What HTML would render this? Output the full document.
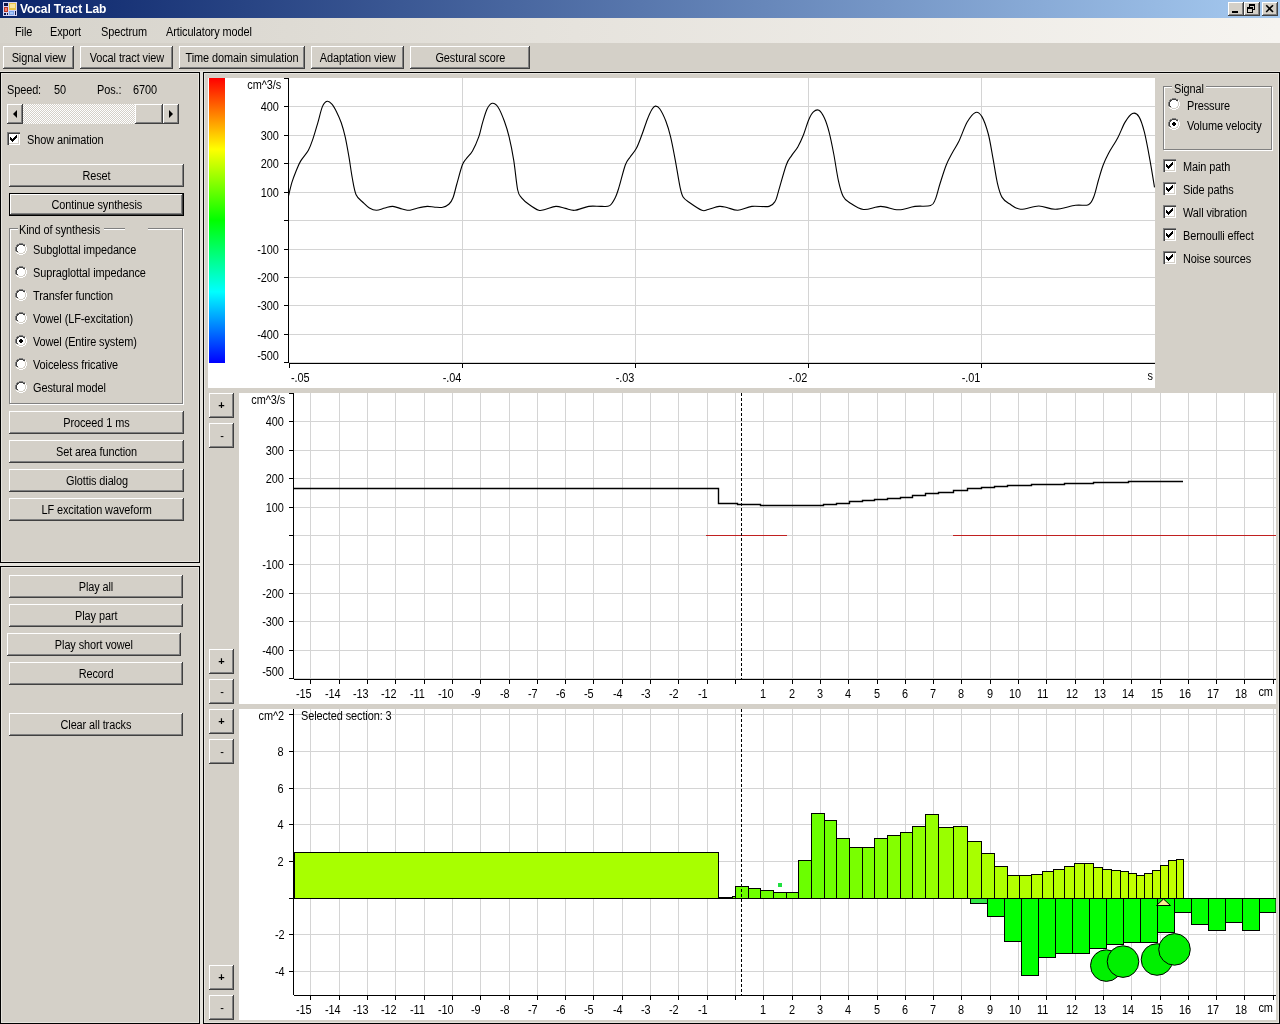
<!DOCTYPE html>
<html><head><meta charset="utf-8"><title>Vocal Tract Lab</title><style>
*{margin:0;padding:0;box-sizing:border-box}
html,body{width:1280px;height:1024px;overflow:hidden;background:#d4d0c8;font:11px 'Liberation Sans', sans-serif;color:#000}
body>div,.a{position:absolute}
#tx{position:absolute;left:0;top:0;width:1280px;height:1024px;z-index:2;will-change:transform}
.t{position:absolute;line-height:13px;white-space:pre;letter-spacing:-0.1px}
.btn{position:absolute;background:#d4d0c8;box-shadow:inset -1px -1px #404040,inset 1px 1px #fff,inset -2px -2px #808080,inset 2px 2px #d4d0c8}
.btn.def{box-shadow:inset 0 0 0 1px #000,inset -2px -2px #404040,inset 2px 2px #fff,inset -3px -3px #808080}
.panel{position:absolute;border:1px solid #000;box-shadow:inset 0 0 0 1px #e6e4de}
.chk{position:absolute;background:#fff;box-shadow:inset 1px 1px #808080,inset 2px 2px #404040,inset -1px -1px #fff,inset -2px -2px #d4d0c8}
.grp{position:absolute;border:1px solid #808080;box-shadow:1px 1px #fff,inset 1px 1px #fff}
svg.plots{position:absolute;left:0;top:0;z-index:1}
</style></head>
<body>

<div class="" style="left:0px;top:0px;width:1280px;height:18px;background:linear-gradient(to right,#0a246a,#a6caf0)"></div>
<svg class="a" style="left:3px;top:2px" width="14" height="14" shape-rendering="crispEdges"><rect x="0" y="0" width="1" height="1" fill="#d4d4f4"/><rect x="1" y="0" width="1" height="1" fill="#d4d4f4"/><rect x="2" y="0" width="1" height="1" fill="#d4d4f4"/><rect x="3" y="0" width="1" height="1" fill="#d4d4f4"/><rect x="4" y="0" width="1" height="1" fill="#d4d4f4"/><rect x="5" y="0" width="1" height="1" fill="#d4d4f4"/><rect x="6" y="0" width="1" height="1" fill="#d4d4f4"/><rect x="7" y="0" width="1" height="1" fill="#d4d4f4"/><rect x="8" y="0" width="1" height="1" fill="#d4d4f4"/><rect x="9" y="0" width="1" height="1" fill="#d4d4f4"/><rect x="10" y="0" width="1" height="1" fill="#d4d4f4"/><rect x="11" y="0" width="1" height="1" fill="#d4d4f4"/><rect x="12" y="0" width="1" height="1" fill="#d4d4f4"/><rect x="13" y="0" width="1" height="1" fill="#d4d4f4"/><rect x="0" y="1" width="1" height="1" fill="#d4d4f4"/><rect x="1" y="1" width="1" height="1" fill="#0c1448"/><rect x="2" y="1" width="1" height="1" fill="#0c1448"/><rect x="3" y="1" width="1" height="1" fill="#0c1448"/><rect x="4" y="1" width="1" height="1" fill="#0c1448"/><rect x="5" y="1" width="1" height="1" fill="#d4d4f4"/><rect x="6" y="1" width="1" height="1" fill="#e8c448"/><rect x="7" y="1" width="1" height="1" fill="#e8c448"/><rect x="8" y="1" width="1" height="1" fill="#e8c448"/><rect x="9" y="1" width="1" height="1" fill="#e8c448"/><rect x="10" y="1" width="1" height="1" fill="#e8c448"/><rect x="11" y="1" width="1" height="1" fill="#e8c448"/><rect x="12" y="1" width="1" height="1" fill="#e8c448"/><rect x="13" y="1" width="1" height="1" fill="#d4d4f4"/><rect x="0" y="2" width="1" height="1" fill="#d4d4f4"/><rect x="1" y="2" width="1" height="1" fill="#0c1448"/><rect x="2" y="2" width="1" height="1" fill="#0c1448"/><rect x="3" y="2" width="1" height="1" fill="#0c1448"/><rect x="4" y="2" width="1" height="1" fill="#0c1448"/><rect x="5" y="2" width="1" height="1" fill="#d4d4f4"/><rect x="6" y="2" width="1" height="1" fill="#e8c448"/><rect x="7" y="2" width="1" height="1" fill="#e8c448"/><rect x="8" y="2" width="1" height="1" fill="#e8c448"/><rect x="9" y="2" width="1" height="1" fill="#e8c448"/><rect x="10" y="2" width="1" height="1" fill="#e8c448"/><rect x="11" y="2" width="1" height="1" fill="#e8c448"/><rect x="12" y="2" width="1" height="1" fill="#e8c448"/><rect x="13" y="2" width="1" height="1" fill="#d4d4f4"/><rect x="0" y="3" width="1" height="1" fill="#d4d4f4"/><rect x="1" y="3" width="1" height="1" fill="#0c1448"/><rect x="2" y="3" width="1" height="1" fill="#0c1448"/><rect x="3" y="3" width="1" height="1" fill="#0c1448"/><rect x="4" y="3" width="1" height="1" fill="#0c1448"/><rect x="5" y="3" width="1" height="1" fill="#d4d4f4"/><rect x="6" y="3" width="1" height="1" fill="#e8c448"/><rect x="7" y="3" width="1" height="1" fill="#e8c448"/><rect x="8" y="3" width="1" height="1" fill="#e8c448"/><rect x="9" y="3" width="1" height="1" fill="#e8c448"/><rect x="10" y="3" width="1" height="1" fill="#e8c448"/><rect x="11" y="3" width="1" height="1" fill="#e8c448"/><rect x="12" y="3" width="1" height="1" fill="#e8c448"/><rect x="13" y="3" width="1" height="1" fill="#d4d4f4"/><rect x="0" y="4" width="1" height="1" fill="#d4d4f4"/><rect x="1" y="4" width="1" height="1" fill="#d4d4f4"/><rect x="2" y="4" width="1" height="1" fill="#d4d4f4"/><rect x="3" y="4" width="1" height="1" fill="#d4d4f4"/><rect x="4" y="4" width="1" height="1" fill="#d4d4f4"/><rect x="5" y="4" width="1" height="1" fill="#d4d4f4"/><rect x="6" y="4" width="1" height="1" fill="#e8c448"/><rect x="7" y="4" width="1" height="1" fill="#e8c448"/><rect x="8" y="4" width="1" height="1" fill="#e8c448"/><rect x="9" y="4" width="1" height="1" fill="#e8c448"/><rect x="10" y="4" width="1" height="1" fill="#e8c448"/><rect x="11" y="4" width="1" height="1" fill="#e8c448"/><rect x="12" y="4" width="1" height="1" fill="#e8c448"/><rect x="13" y="4" width="1" height="1" fill="#d4d4f4"/><rect x="0" y="5" width="1" height="1" fill="#d4d4f4"/><rect x="1" y="5" width="1" height="1" fill="#b83424"/><rect x="2" y="5" width="1" height="1" fill="#b83424"/><rect x="3" y="5" width="1" height="1" fill="#b83424"/><rect x="4" y="5" width="1" height="1" fill="#b83424"/><rect x="5" y="5" width="1" height="1" fill="#d4d4f4"/><rect x="6" y="5" width="1" height="1" fill="#e8c448"/><rect x="7" y="5" width="1" height="1" fill="#e8c448"/><rect x="8" y="5" width="1" height="1" fill="#e8c448"/><rect x="9" y="5" width="1" height="1" fill="#e8c448"/><rect x="10" y="5" width="1" height="1" fill="#e8c448"/><rect x="11" y="5" width="1" height="1" fill="#e8c448"/><rect x="12" y="5" width="1" height="1" fill="#e8c448"/><rect x="13" y="5" width="1" height="1" fill="#d4d4f4"/><rect x="0" y="6" width="1" height="1" fill="#d4d4f4"/><rect x="1" y="6" width="1" height="1" fill="#b83424"/><rect x="2" y="6" width="1" height="1" fill="#b83424"/><rect x="3" y="6" width="1" height="1" fill="#b83424"/><rect x="4" y="6" width="1" height="1" fill="#b83424"/><rect x="5" y="6" width="1" height="1" fill="#d4d4f4"/><rect x="6" y="6" width="1" height="1" fill="#e8c448"/><rect x="7" y="6" width="1" height="1" fill="#e8c448"/><rect x="8" y="6" width="1" height="1" fill="#e8c448"/><rect x="9" y="6" width="1" height="1" fill="#e8c448"/><rect x="10" y="6" width="1" height="1" fill="#e8c448"/><rect x="11" y="6" width="1" height="1" fill="#e8c448"/><rect x="12" y="6" width="1" height="1" fill="#e8c448"/><rect x="13" y="6" width="1" height="1" fill="#d4d4f4"/><rect x="0" y="7" width="1" height="1" fill="#d4d4f4"/><rect x="1" y="7" width="1" height="1" fill="#b83424"/><rect x="2" y="7" width="1" height="1" fill="#b83424"/><rect x="3" y="7" width="1" height="1" fill="#b83424"/><rect x="4" y="7" width="1" height="1" fill="#b83424"/><rect x="5" y="7" width="1" height="1" fill="#d4d4f4"/><rect x="6" y="7" width="1" height="1" fill="#e8c448"/><rect x="7" y="7" width="1" height="1" fill="#e8c448"/><rect x="8" y="7" width="1" height="1" fill="#e8c448"/><rect x="9" y="7" width="1" height="1" fill="#e8c448"/><rect x="10" y="7" width="1" height="1" fill="#e8c448"/><rect x="11" y="7" width="1" height="1" fill="#e8c448"/><rect x="12" y="7" width="1" height="1" fill="#e8c448"/><rect x="13" y="7" width="1" height="1" fill="#d4d4f4"/><rect x="0" y="8" width="1" height="1" fill="#d4d4f4"/><rect x="1" y="8" width="1" height="1" fill="#b83424"/><rect x="2" y="8" width="1" height="1" fill="#b83424"/><rect x="3" y="8" width="1" height="1" fill="#b83424"/><rect x="4" y="8" width="1" height="1" fill="#b83424"/><rect x="5" y="8" width="1" height="1" fill="#d4d4f4"/><rect x="6" y="8" width="1" height="1" fill="#d4d4f4"/><rect x="7" y="8" width="1" height="1" fill="#d4d4f4"/><rect x="8" y="8" width="1" height="1" fill="#d4d4f4"/><rect x="9" y="8" width="1" height="1" fill="#d4d4f4"/><rect x="10" y="8" width="1" height="1" fill="#d4d4f4"/><rect x="11" y="8" width="1" height="1" fill="#d4d4f4"/><rect x="12" y="8" width="1" height="1" fill="#d4d4f4"/><rect x="13" y="8" width="1" height="1" fill="#d4d4f4"/><rect x="0" y="9" width="1" height="1" fill="#d4d4f4"/><rect x="1" y="9" width="1" height="1" fill="#b83424"/><rect x="2" y="9" width="1" height="1" fill="#b83424"/><rect x="3" y="9" width="1" height="1" fill="#b83424"/><rect x="4" y="9" width="1" height="1" fill="#b83424"/><rect x="5" y="9" width="1" height="1" fill="#d4d4f4"/><rect x="6" y="9" width="1" height="1" fill="#7aa4ec"/><rect x="7" y="9" width="1" height="1" fill="#7aa4ec"/><rect x="8" y="9" width="1" height="1" fill="#7aa4ec"/><rect x="9" y="9" width="1" height="1" fill="#7aa4ec"/><rect x="10" y="9" width="1" height="1" fill="#7aa4ec"/><rect x="11" y="9" width="1" height="1" fill="#d4d4f4"/><rect x="12" y="9" width="1" height="1" fill="#0c1448"/><rect x="13" y="9" width="1" height="1" fill="#d4d4f4"/><rect x="0" y="10" width="1" height="1" fill="#d4d4f4"/><rect x="1" y="10" width="1" height="1" fill="#d4d4f4"/><rect x="2" y="10" width="1" height="1" fill="#d4d4f4"/><rect x="3" y="10" width="1" height="1" fill="#d4d4f4"/><rect x="4" y="10" width="1" height="1" fill="#d4d4f4"/><rect x="5" y="10" width="1" height="1" fill="#d4d4f4"/><rect x="6" y="10" width="1" height="1" fill="#7aa4ec"/><rect x="7" y="10" width="1" height="1" fill="#7aa4ec"/><rect x="8" y="10" width="1" height="1" fill="#7aa4ec"/><rect x="9" y="10" width="1" height="1" fill="#7aa4ec"/><rect x="10" y="10" width="1" height="1" fill="#7aa4ec"/><rect x="11" y="10" width="1" height="1" fill="#d4d4f4"/><rect x="12" y="10" width="1" height="1" fill="#0c1448"/><rect x="13" y="10" width="1" height="1" fill="#d4d4f4"/><rect x="0" y="11" width="1" height="1" fill="#d4d4f4"/><rect x="1" y="11" width="1" height="1" fill="#0c1448"/><rect x="2" y="11" width="1" height="1" fill="#0c1448"/><rect x="3" y="11" width="1" height="1" fill="#d4d4f4"/><rect x="4" y="11" width="1" height="1" fill="#0c1448"/><rect x="5" y="11" width="1" height="1" fill="#d4d4f4"/><rect x="6" y="11" width="1" height="1" fill="#7aa4ec"/><rect x="7" y="11" width="1" height="1" fill="#7aa4ec"/><rect x="8" y="11" width="1" height="1" fill="#7aa4ec"/><rect x="9" y="11" width="1" height="1" fill="#7aa4ec"/><rect x="10" y="11" width="1" height="1" fill="#7aa4ec"/><rect x="11" y="11" width="1" height="1" fill="#d4d4f4"/><rect x="12" y="11" width="1" height="1" fill="#0c1448"/><rect x="13" y="11" width="1" height="1" fill="#d4d4f4"/><rect x="0" y="12" width="1" height="1" fill="#d4d4f4"/><rect x="1" y="12" width="1" height="1" fill="#0c1448"/><rect x="2" y="12" width="1" height="1" fill="#0c1448"/><rect x="3" y="12" width="1" height="1" fill="#d4d4f4"/><rect x="4" y="12" width="1" height="1" fill="#0c1448"/><rect x="5" y="12" width="1" height="1" fill="#d4d4f4"/><rect x="6" y="12" width="1" height="1" fill="#7aa4ec"/><rect x="7" y="12" width="1" height="1" fill="#7aa4ec"/><rect x="8" y="12" width="1" height="1" fill="#7aa4ec"/><rect x="9" y="12" width="1" height="1" fill="#7aa4ec"/><rect x="10" y="12" width="1" height="1" fill="#7aa4ec"/><rect x="11" y="12" width="1" height="1" fill="#d4d4f4"/><rect x="12" y="12" width="1" height="1" fill="#0c1448"/><rect x="13" y="12" width="1" height="1" fill="#d4d4f4"/><rect x="0" y="13" width="1" height="1" fill="#d4d4f4"/><rect x="1" y="13" width="1" height="1" fill="#d4d4f4"/><rect x="2" y="13" width="1" height="1" fill="#d4d4f4"/><rect x="3" y="13" width="1" height="1" fill="#d4d4f4"/><rect x="4" y="13" width="1" height="1" fill="#d4d4f4"/><rect x="5" y="13" width="1" height="1" fill="#d4d4f4"/><rect x="6" y="13" width="1" height="1" fill="#d4d4f4"/><rect x="7" y="13" width="1" height="1" fill="#d4d4f4"/><rect x="8" y="13" width="1" height="1" fill="#d4d4f4"/><rect x="9" y="13" width="1" height="1" fill="#d4d4f4"/><rect x="10" y="13" width="1" height="1" fill="#d4d4f4"/><rect x="11" y="13" width="1" height="1" fill="#d4d4f4"/><rect x="12" y="13" width="1" height="1" fill="#d4d4f4"/><rect x="13" y="13" width="1" height="1" fill="#d4d4f4"/><rect x="7" y="2" width="5" height="4" fill="#f8e49c"/><rect x="2" y="6" width="2" height="3" fill="#f08070"/><rect x="7" y="10" width="3" height="2" fill="#a8c8f8"/></svg>
<div class="btn" style="left:1228px;top:2px;width:16px;height:14px;"></div>
<div class="btn" style="left:1244px;top:2px;width:16px;height:14px;"></div>
<div class="btn" style="left:1262px;top:2px;width:16px;height:14px;"></div>
<svg class="a" style="left:1228px;top:2px" width="50" height="14"><rect x="4" y="9" width="6" height="2" fill="#000"/><g transform="translate(16,0)" fill="none" stroke="#000" shape-rendering="crispEdges"><rect x="5.5" y="2.5" width="5" height="5"/><line x1="5" y1="3.5" x2="11" y2="3.5"/><rect x="3.5" y="5.5" width="5" height="5" fill="#d4d0c8"/><line x1="3" y1="6.5" x2="9" y2="6.5"/></g><g transform="translate(34,0)" stroke="#000" stroke-width="1.6"><line x1="4.2" y1="3.2" x2="11" y2="10"/><line x1="11" y1="3.2" x2="4.2" y2="10"/></g></svg>
<div class="" style="left:0px;top:18px;width:1280px;height:25px;background:linear-gradient(to right,#d6d3cb,#e6e3dd 45%,#f6f4f0)"></div>
<div class="btn" style="left:3px;top:46px;width:71px;height:23px;"></div>
<div class="btn" style="left:80px;top:46px;width:93px;height:23px;"></div>
<div class="btn" style="left:179px;top:46px;width:126px;height:23px;"></div>
<div class="btn" style="left:311px;top:46px;width:93px;height:23px;"></div>
<div class="btn" style="left:410px;top:46px;width:120px;height:23px;"></div>
<div class="" style="left:0px;top:71px;width:1280px;height:1px;background:#e4e2dc"></div>
<div class="" style="left:200px;top:72px;width:3px;height:952px;background:#e4e2dc"></div>
<div class="" style="left:0px;top:563px;width:200px;height:3px;background:#e4e2dc"></div>
<div class="panel" style="left:0px;top:72px;width:200px;height:491px;"></div>
<div class="panel" style="left:0px;top:566px;width:200px;height:458px;"></div>
<div class="panel" style="left:203px;top:72px;width:1077px;height:952px;"></div>
<div class="" style="left:23px;top:104px;width:112px;height:20px;background:repeating-conic-gradient(#fff 0 25%,#d4d0c8 0 50%) 0 0/2px 2px"></div>
<div class="btn" style="left:7px;top:104px;width:16px;height:20px;"></div>
<div class="btn" style="left:135px;top:104px;width:28px;height:20px;"></div>
<div class="btn" style="left:163px;top:104px;width:16px;height:20px;"></div>
<svg class="a" style="left:7px;top:104px" width="172" height="20"><path d="M6 10 L10 6 L10 14 Z" fill="#000"/><path d="M162 6 L166 10 L162 14 Z" fill="#000"/></svg>
<div class="chk" style="left:7px;top:132px;width:13px;height:13px;"></div>
<svg class="a" style="left:7px;top:132px" width="13" height="13" shape-rendering="crispEdges"><rect x="9" y="3" width="1" height="1"/><rect x="8" y="4" width="1" height="1"/><rect x="9" y="4" width="1" height="1"/><rect x="3" y="5" width="1" height="1"/><rect x="7" y="5" width="1" height="1"/><rect x="8" y="5" width="1" height="1"/><rect x="9" y="5" width="1" height="1"/><rect x="3" y="6" width="1" height="1"/><rect x="4" y="6" width="1" height="1"/><rect x="6" y="6" width="1" height="1"/><rect x="7" y="6" width="1" height="1"/><rect x="8" y="6" width="1" height="1"/><rect x="3" y="7" width="1" height="1"/><rect x="4" y="7" width="1" height="1"/><rect x="5" y="7" width="1" height="1"/><rect x="6" y="7" width="1" height="1"/><rect x="7" y="7" width="1" height="1"/><rect x="4" y="8" width="1" height="1"/><rect x="5" y="8" width="1" height="1"/><rect x="6" y="8" width="1" height="1"/><rect x="5" y="9" width="1" height="1"/></svg>
<div class="btn" style="left:9px;top:164px;width:175px;height:23px;"></div>
<div class="btn def" style="left:9px;top:193px;width:175px;height:23px;"></div>
<div class="grp" style="left:9px;top:228px;width:174px;height:176px"></div>
<div class="" style="left:18px;top:222px;width:86px;height:12px;background:#d4d0c8"></div>
<div class="" style="left:125px;top:226px;width:23px;height:4px;background:#d4d0c8"></div>
<svg class="a" style="left:15px;top:243px" width="12" height="12" shape-rendering="crispEdges"><rect x="4" y="0" width="1" height="1" fill="#808080"/><rect x="5" y="0" width="1" height="1" fill="#808080"/><rect x="6" y="0" width="1" height="1" fill="#808080"/><rect x="7" y="0" width="1" height="1" fill="#808080"/><rect x="2" y="1" width="1" height="1" fill="#808080"/><rect x="3" y="1" width="1" height="1" fill="#808080"/><rect x="4" y="1" width="1" height="1" fill="#404040"/><rect x="5" y="1" width="1" height="1" fill="#404040"/><rect x="6" y="1" width="1" height="1" fill="#404040"/><rect x="7" y="1" width="1" height="1" fill="#404040"/><rect x="8" y="1" width="1" height="1" fill="#808080"/><rect x="9" y="1" width="1" height="1" fill="#808080"/><rect x="1" y="2" width="1" height="1" fill="#808080"/><rect x="2" y="2" width="1" height="1" fill="#404040"/><rect x="3" y="2" width="1" height="1" fill="#404040"/><rect x="4" y="2" width="1" height="1" fill="#fff"/><rect x="5" y="2" width="1" height="1" fill="#fff"/><rect x="6" y="2" width="1" height="1" fill="#fff"/><rect x="7" y="2" width="1" height="1" fill="#fff"/><rect x="8" y="2" width="1" height="1" fill="#404040"/><rect x="9" y="2" width="1" height="1" fill="#404040"/><rect x="10" y="2" width="1" height="1" fill="#fff"/><rect x="1" y="3" width="1" height="1" fill="#808080"/><rect x="2" y="3" width="1" height="1" fill="#404040"/><rect x="3" y="3" width="1" height="1" fill="#fff"/><rect x="4" y="3" width="1" height="1" fill="#fff"/><rect x="5" y="3" width="1" height="1" fill="#fff"/><rect x="6" y="3" width="1" height="1" fill="#fff"/><rect x="7" y="3" width="1" height="1" fill="#fff"/><rect x="8" y="3" width="1" height="1" fill="#fff"/><rect x="9" y="3" width="1" height="1" fill="#d4d0c8"/><rect x="10" y="3" width="1" height="1" fill="#fff"/><rect x="0" y="4" width="1" height="1" fill="#808080"/><rect x="1" y="4" width="1" height="1" fill="#404040"/><rect x="2" y="4" width="1" height="1" fill="#fff"/><rect x="3" y="4" width="1" height="1" fill="#fff"/><rect x="4" y="4" width="1" height="1" fill="#fff"/><rect x="5" y="4" width="1" height="1" fill="#fff"/><rect x="6" y="4" width="1" height="1" fill="#fff"/><rect x="7" y="4" width="1" height="1" fill="#fff"/><rect x="8" y="4" width="1" height="1" fill="#fff"/><rect x="9" y="4" width="1" height="1" fill="#fff"/><rect x="10" y="4" width="1" height="1" fill="#d4d0c8"/><rect x="11" y="4" width="1" height="1" fill="#fff"/><rect x="0" y="5" width="1" height="1" fill="#808080"/><rect x="1" y="5" width="1" height="1" fill="#404040"/><rect x="2" y="5" width="1" height="1" fill="#fff"/><rect x="3" y="5" width="1" height="1" fill="#fff"/><rect x="4" y="5" width="1" height="1" fill="#fff"/><rect x="5" y="5" width="1" height="1" fill="#fff"/><rect x="6" y="5" width="1" height="1" fill="#fff"/><rect x="7" y="5" width="1" height="1" fill="#fff"/><rect x="8" y="5" width="1" height="1" fill="#fff"/><rect x="9" y="5" width="1" height="1" fill="#fff"/><rect x="10" y="5" width="1" height="1" fill="#d4d0c8"/><rect x="11" y="5" width="1" height="1" fill="#fff"/><rect x="0" y="6" width="1" height="1" fill="#808080"/><rect x="1" y="6" width="1" height="1" fill="#404040"/><rect x="2" y="6" width="1" height="1" fill="#fff"/><rect x="3" y="6" width="1" height="1" fill="#fff"/><rect x="4" y="6" width="1" height="1" fill="#fff"/><rect x="5" y="6" width="1" height="1" fill="#fff"/><rect x="6" y="6" width="1" height="1" fill="#fff"/><rect x="7" y="6" width="1" height="1" fill="#fff"/><rect x="8" y="6" width="1" height="1" fill="#fff"/><rect x="9" y="6" width="1" height="1" fill="#fff"/><rect x="10" y="6" width="1" height="1" fill="#d4d0c8"/><rect x="11" y="6" width="1" height="1" fill="#fff"/><rect x="0" y="7" width="1" height="1" fill="#808080"/><rect x="1" y="7" width="1" height="1" fill="#404040"/><rect x="2" y="7" width="1" height="1" fill="#fff"/><rect x="3" y="7" width="1" height="1" fill="#fff"/><rect x="4" y="7" width="1" height="1" fill="#fff"/><rect x="5" y="7" width="1" height="1" fill="#fff"/><rect x="6" y="7" width="1" height="1" fill="#fff"/><rect x="7" y="7" width="1" height="1" fill="#fff"/><rect x="8" y="7" width="1" height="1" fill="#fff"/><rect x="9" y="7" width="1" height="1" fill="#fff"/><rect x="10" y="7" width="1" height="1" fill="#d4d0c8"/><rect x="11" y="7" width="1" height="1" fill="#fff"/><rect x="1" y="8" width="1" height="1" fill="#808080"/><rect x="2" y="8" width="1" height="1" fill="#404040"/><rect x="3" y="8" width="1" height="1" fill="#fff"/><rect x="4" y="8" width="1" height="1" fill="#fff"/><rect x="5" y="8" width="1" height="1" fill="#fff"/><rect x="6" y="8" width="1" height="1" fill="#fff"/><rect x="7" y="8" width="1" height="1" fill="#fff"/><rect x="8" y="8" width="1" height="1" fill="#fff"/><rect x="9" y="8" width="1" height="1" fill="#d4d0c8"/><rect x="10" y="8" width="1" height="1" fill="#fff"/><rect x="1" y="9" width="1" height="1" fill="#fff"/><rect x="2" y="9" width="1" height="1" fill="#d4d0c8"/><rect x="3" y="9" width="1" height="1" fill="#d4d0c8"/><rect x="4" y="9" width="1" height="1" fill="#fff"/><rect x="5" y="9" width="1" height="1" fill="#fff"/><rect x="6" y="9" width="1" height="1" fill="#fff"/><rect x="7" y="9" width="1" height="1" fill="#fff"/><rect x="8" y="9" width="1" height="1" fill="#d4d0c8"/><rect x="9" y="9" width="1" height="1" fill="#d4d0c8"/><rect x="10" y="9" width="1" height="1" fill="#fff"/><rect x="2" y="10" width="1" height="1" fill="#fff"/><rect x="3" y="10" width="1" height="1" fill="#fff"/><rect x="4" y="10" width="1" height="1" fill="#d4d0c8"/><rect x="5" y="10" width="1" height="1" fill="#d4d0c8"/><rect x="6" y="10" width="1" height="1" fill="#d4d0c8"/><rect x="7" y="10" width="1" height="1" fill="#d4d0c8"/><rect x="8" y="10" width="1" height="1" fill="#fff"/><rect x="9" y="10" width="1" height="1" fill="#fff"/><rect x="4" y="11" width="1" height="1" fill="#fff"/><rect x="5" y="11" width="1" height="1" fill="#fff"/><rect x="6" y="11" width="1" height="1" fill="#fff"/><rect x="7" y="11" width="1" height="1" fill="#fff"/></svg>
<svg class="a" style="left:15px;top:266px" width="12" height="12" shape-rendering="crispEdges"><rect x="4" y="0" width="1" height="1" fill="#808080"/><rect x="5" y="0" width="1" height="1" fill="#808080"/><rect x="6" y="0" width="1" height="1" fill="#808080"/><rect x="7" y="0" width="1" height="1" fill="#808080"/><rect x="2" y="1" width="1" height="1" fill="#808080"/><rect x="3" y="1" width="1" height="1" fill="#808080"/><rect x="4" y="1" width="1" height="1" fill="#404040"/><rect x="5" y="1" width="1" height="1" fill="#404040"/><rect x="6" y="1" width="1" height="1" fill="#404040"/><rect x="7" y="1" width="1" height="1" fill="#404040"/><rect x="8" y="1" width="1" height="1" fill="#808080"/><rect x="9" y="1" width="1" height="1" fill="#808080"/><rect x="1" y="2" width="1" height="1" fill="#808080"/><rect x="2" y="2" width="1" height="1" fill="#404040"/><rect x="3" y="2" width="1" height="1" fill="#404040"/><rect x="4" y="2" width="1" height="1" fill="#fff"/><rect x="5" y="2" width="1" height="1" fill="#fff"/><rect x="6" y="2" width="1" height="1" fill="#fff"/><rect x="7" y="2" width="1" height="1" fill="#fff"/><rect x="8" y="2" width="1" height="1" fill="#404040"/><rect x="9" y="2" width="1" height="1" fill="#404040"/><rect x="10" y="2" width="1" height="1" fill="#fff"/><rect x="1" y="3" width="1" height="1" fill="#808080"/><rect x="2" y="3" width="1" height="1" fill="#404040"/><rect x="3" y="3" width="1" height="1" fill="#fff"/><rect x="4" y="3" width="1" height="1" fill="#fff"/><rect x="5" y="3" width="1" height="1" fill="#fff"/><rect x="6" y="3" width="1" height="1" fill="#fff"/><rect x="7" y="3" width="1" height="1" fill="#fff"/><rect x="8" y="3" width="1" height="1" fill="#fff"/><rect x="9" y="3" width="1" height="1" fill="#d4d0c8"/><rect x="10" y="3" width="1" height="1" fill="#fff"/><rect x="0" y="4" width="1" height="1" fill="#808080"/><rect x="1" y="4" width="1" height="1" fill="#404040"/><rect x="2" y="4" width="1" height="1" fill="#fff"/><rect x="3" y="4" width="1" height="1" fill="#fff"/><rect x="4" y="4" width="1" height="1" fill="#fff"/><rect x="5" y="4" width="1" height="1" fill="#fff"/><rect x="6" y="4" width="1" height="1" fill="#fff"/><rect x="7" y="4" width="1" height="1" fill="#fff"/><rect x="8" y="4" width="1" height="1" fill="#fff"/><rect x="9" y="4" width="1" height="1" fill="#fff"/><rect x="10" y="4" width="1" height="1" fill="#d4d0c8"/><rect x="11" y="4" width="1" height="1" fill="#fff"/><rect x="0" y="5" width="1" height="1" fill="#808080"/><rect x="1" y="5" width="1" height="1" fill="#404040"/><rect x="2" y="5" width="1" height="1" fill="#fff"/><rect x="3" y="5" width="1" height="1" fill="#fff"/><rect x="4" y="5" width="1" height="1" fill="#fff"/><rect x="5" y="5" width="1" height="1" fill="#fff"/><rect x="6" y="5" width="1" height="1" fill="#fff"/><rect x="7" y="5" width="1" height="1" fill="#fff"/><rect x="8" y="5" width="1" height="1" fill="#fff"/><rect x="9" y="5" width="1" height="1" fill="#fff"/><rect x="10" y="5" width="1" height="1" fill="#d4d0c8"/><rect x="11" y="5" width="1" height="1" fill="#fff"/><rect x="0" y="6" width="1" height="1" fill="#808080"/><rect x="1" y="6" width="1" height="1" fill="#404040"/><rect x="2" y="6" width="1" height="1" fill="#fff"/><rect x="3" y="6" width="1" height="1" fill="#fff"/><rect x="4" y="6" width="1" height="1" fill="#fff"/><rect x="5" y="6" width="1" height="1" fill="#fff"/><rect x="6" y="6" width="1" height="1" fill="#fff"/><rect x="7" y="6" width="1" height="1" fill="#fff"/><rect x="8" y="6" width="1" height="1" fill="#fff"/><rect x="9" y="6" width="1" height="1" fill="#fff"/><rect x="10" y="6" width="1" height="1" fill="#d4d0c8"/><rect x="11" y="6" width="1" height="1" fill="#fff"/><rect x="0" y="7" width="1" height="1" fill="#808080"/><rect x="1" y="7" width="1" height="1" fill="#404040"/><rect x="2" y="7" width="1" height="1" fill="#fff"/><rect x="3" y="7" width="1" height="1" fill="#fff"/><rect x="4" y="7" width="1" height="1" fill="#fff"/><rect x="5" y="7" width="1" height="1" fill="#fff"/><rect x="6" y="7" width="1" height="1" fill="#fff"/><rect x="7" y="7" width="1" height="1" fill="#fff"/><rect x="8" y="7" width="1" height="1" fill="#fff"/><rect x="9" y="7" width="1" height="1" fill="#fff"/><rect x="10" y="7" width="1" height="1" fill="#d4d0c8"/><rect x="11" y="7" width="1" height="1" fill="#fff"/><rect x="1" y="8" width="1" height="1" fill="#808080"/><rect x="2" y="8" width="1" height="1" fill="#404040"/><rect x="3" y="8" width="1" height="1" fill="#fff"/><rect x="4" y="8" width="1" height="1" fill="#fff"/><rect x="5" y="8" width="1" height="1" fill="#fff"/><rect x="6" y="8" width="1" height="1" fill="#fff"/><rect x="7" y="8" width="1" height="1" fill="#fff"/><rect x="8" y="8" width="1" height="1" fill="#fff"/><rect x="9" y="8" width="1" height="1" fill="#d4d0c8"/><rect x="10" y="8" width="1" height="1" fill="#fff"/><rect x="1" y="9" width="1" height="1" fill="#fff"/><rect x="2" y="9" width="1" height="1" fill="#d4d0c8"/><rect x="3" y="9" width="1" height="1" fill="#d4d0c8"/><rect x="4" y="9" width="1" height="1" fill="#fff"/><rect x="5" y="9" width="1" height="1" fill="#fff"/><rect x="6" y="9" width="1" height="1" fill="#fff"/><rect x="7" y="9" width="1" height="1" fill="#fff"/><rect x="8" y="9" width="1" height="1" fill="#d4d0c8"/><rect x="9" y="9" width="1" height="1" fill="#d4d0c8"/><rect x="10" y="9" width="1" height="1" fill="#fff"/><rect x="2" y="10" width="1" height="1" fill="#fff"/><rect x="3" y="10" width="1" height="1" fill="#fff"/><rect x="4" y="10" width="1" height="1" fill="#d4d0c8"/><rect x="5" y="10" width="1" height="1" fill="#d4d0c8"/><rect x="6" y="10" width="1" height="1" fill="#d4d0c8"/><rect x="7" y="10" width="1" height="1" fill="#d4d0c8"/><rect x="8" y="10" width="1" height="1" fill="#fff"/><rect x="9" y="10" width="1" height="1" fill="#fff"/><rect x="4" y="11" width="1" height="1" fill="#fff"/><rect x="5" y="11" width="1" height="1" fill="#fff"/><rect x="6" y="11" width="1" height="1" fill="#fff"/><rect x="7" y="11" width="1" height="1" fill="#fff"/></svg>
<svg class="a" style="left:15px;top:289px" width="12" height="12" shape-rendering="crispEdges"><rect x="4" y="0" width="1" height="1" fill="#808080"/><rect x="5" y="0" width="1" height="1" fill="#808080"/><rect x="6" y="0" width="1" height="1" fill="#808080"/><rect x="7" y="0" width="1" height="1" fill="#808080"/><rect x="2" y="1" width="1" height="1" fill="#808080"/><rect x="3" y="1" width="1" height="1" fill="#808080"/><rect x="4" y="1" width="1" height="1" fill="#404040"/><rect x="5" y="1" width="1" height="1" fill="#404040"/><rect x="6" y="1" width="1" height="1" fill="#404040"/><rect x="7" y="1" width="1" height="1" fill="#404040"/><rect x="8" y="1" width="1" height="1" fill="#808080"/><rect x="9" y="1" width="1" height="1" fill="#808080"/><rect x="1" y="2" width="1" height="1" fill="#808080"/><rect x="2" y="2" width="1" height="1" fill="#404040"/><rect x="3" y="2" width="1" height="1" fill="#404040"/><rect x="4" y="2" width="1" height="1" fill="#fff"/><rect x="5" y="2" width="1" height="1" fill="#fff"/><rect x="6" y="2" width="1" height="1" fill="#fff"/><rect x="7" y="2" width="1" height="1" fill="#fff"/><rect x="8" y="2" width="1" height="1" fill="#404040"/><rect x="9" y="2" width="1" height="1" fill="#404040"/><rect x="10" y="2" width="1" height="1" fill="#fff"/><rect x="1" y="3" width="1" height="1" fill="#808080"/><rect x="2" y="3" width="1" height="1" fill="#404040"/><rect x="3" y="3" width="1" height="1" fill="#fff"/><rect x="4" y="3" width="1" height="1" fill="#fff"/><rect x="5" y="3" width="1" height="1" fill="#fff"/><rect x="6" y="3" width="1" height="1" fill="#fff"/><rect x="7" y="3" width="1" height="1" fill="#fff"/><rect x="8" y="3" width="1" height="1" fill="#fff"/><rect x="9" y="3" width="1" height="1" fill="#d4d0c8"/><rect x="10" y="3" width="1" height="1" fill="#fff"/><rect x="0" y="4" width="1" height="1" fill="#808080"/><rect x="1" y="4" width="1" height="1" fill="#404040"/><rect x="2" y="4" width="1" height="1" fill="#fff"/><rect x="3" y="4" width="1" height="1" fill="#fff"/><rect x="4" y="4" width="1" height="1" fill="#fff"/><rect x="5" y="4" width="1" height="1" fill="#fff"/><rect x="6" y="4" width="1" height="1" fill="#fff"/><rect x="7" y="4" width="1" height="1" fill="#fff"/><rect x="8" y="4" width="1" height="1" fill="#fff"/><rect x="9" y="4" width="1" height="1" fill="#fff"/><rect x="10" y="4" width="1" height="1" fill="#d4d0c8"/><rect x="11" y="4" width="1" height="1" fill="#fff"/><rect x="0" y="5" width="1" height="1" fill="#808080"/><rect x="1" y="5" width="1" height="1" fill="#404040"/><rect x="2" y="5" width="1" height="1" fill="#fff"/><rect x="3" y="5" width="1" height="1" fill="#fff"/><rect x="4" y="5" width="1" height="1" fill="#fff"/><rect x="5" y="5" width="1" height="1" fill="#fff"/><rect x="6" y="5" width="1" height="1" fill="#fff"/><rect x="7" y="5" width="1" height="1" fill="#fff"/><rect x="8" y="5" width="1" height="1" fill="#fff"/><rect x="9" y="5" width="1" height="1" fill="#fff"/><rect x="10" y="5" width="1" height="1" fill="#d4d0c8"/><rect x="11" y="5" width="1" height="1" fill="#fff"/><rect x="0" y="6" width="1" height="1" fill="#808080"/><rect x="1" y="6" width="1" height="1" fill="#404040"/><rect x="2" y="6" width="1" height="1" fill="#fff"/><rect x="3" y="6" width="1" height="1" fill="#fff"/><rect x="4" y="6" width="1" height="1" fill="#fff"/><rect x="5" y="6" width="1" height="1" fill="#fff"/><rect x="6" y="6" width="1" height="1" fill="#fff"/><rect x="7" y="6" width="1" height="1" fill="#fff"/><rect x="8" y="6" width="1" height="1" fill="#fff"/><rect x="9" y="6" width="1" height="1" fill="#fff"/><rect x="10" y="6" width="1" height="1" fill="#d4d0c8"/><rect x="11" y="6" width="1" height="1" fill="#fff"/><rect x="0" y="7" width="1" height="1" fill="#808080"/><rect x="1" y="7" width="1" height="1" fill="#404040"/><rect x="2" y="7" width="1" height="1" fill="#fff"/><rect x="3" y="7" width="1" height="1" fill="#fff"/><rect x="4" y="7" width="1" height="1" fill="#fff"/><rect x="5" y="7" width="1" height="1" fill="#fff"/><rect x="6" y="7" width="1" height="1" fill="#fff"/><rect x="7" y="7" width="1" height="1" fill="#fff"/><rect x="8" y="7" width="1" height="1" fill="#fff"/><rect x="9" y="7" width="1" height="1" fill="#fff"/><rect x="10" y="7" width="1" height="1" fill="#d4d0c8"/><rect x="11" y="7" width="1" height="1" fill="#fff"/><rect x="1" y="8" width="1" height="1" fill="#808080"/><rect x="2" y="8" width="1" height="1" fill="#404040"/><rect x="3" y="8" width="1" height="1" fill="#fff"/><rect x="4" y="8" width="1" height="1" fill="#fff"/><rect x="5" y="8" width="1" height="1" fill="#fff"/><rect x="6" y="8" width="1" height="1" fill="#fff"/><rect x="7" y="8" width="1" height="1" fill="#fff"/><rect x="8" y="8" width="1" height="1" fill="#fff"/><rect x="9" y="8" width="1" height="1" fill="#d4d0c8"/><rect x="10" y="8" width="1" height="1" fill="#fff"/><rect x="1" y="9" width="1" height="1" fill="#fff"/><rect x="2" y="9" width="1" height="1" fill="#d4d0c8"/><rect x="3" y="9" width="1" height="1" fill="#d4d0c8"/><rect x="4" y="9" width="1" height="1" fill="#fff"/><rect x="5" y="9" width="1" height="1" fill="#fff"/><rect x="6" y="9" width="1" height="1" fill="#fff"/><rect x="7" y="9" width="1" height="1" fill="#fff"/><rect x="8" y="9" width="1" height="1" fill="#d4d0c8"/><rect x="9" y="9" width="1" height="1" fill="#d4d0c8"/><rect x="10" y="9" width="1" height="1" fill="#fff"/><rect x="2" y="10" width="1" height="1" fill="#fff"/><rect x="3" y="10" width="1" height="1" fill="#fff"/><rect x="4" y="10" width="1" height="1" fill="#d4d0c8"/><rect x="5" y="10" width="1" height="1" fill="#d4d0c8"/><rect x="6" y="10" width="1" height="1" fill="#d4d0c8"/><rect x="7" y="10" width="1" height="1" fill="#d4d0c8"/><rect x="8" y="10" width="1" height="1" fill="#fff"/><rect x="9" y="10" width="1" height="1" fill="#fff"/><rect x="4" y="11" width="1" height="1" fill="#fff"/><rect x="5" y="11" width="1" height="1" fill="#fff"/><rect x="6" y="11" width="1" height="1" fill="#fff"/><rect x="7" y="11" width="1" height="1" fill="#fff"/></svg>
<svg class="a" style="left:15px;top:312px" width="12" height="12" shape-rendering="crispEdges"><rect x="4" y="0" width="1" height="1" fill="#808080"/><rect x="5" y="0" width="1" height="1" fill="#808080"/><rect x="6" y="0" width="1" height="1" fill="#808080"/><rect x="7" y="0" width="1" height="1" fill="#808080"/><rect x="2" y="1" width="1" height="1" fill="#808080"/><rect x="3" y="1" width="1" height="1" fill="#808080"/><rect x="4" y="1" width="1" height="1" fill="#404040"/><rect x="5" y="1" width="1" height="1" fill="#404040"/><rect x="6" y="1" width="1" height="1" fill="#404040"/><rect x="7" y="1" width="1" height="1" fill="#404040"/><rect x="8" y="1" width="1" height="1" fill="#808080"/><rect x="9" y="1" width="1" height="1" fill="#808080"/><rect x="1" y="2" width="1" height="1" fill="#808080"/><rect x="2" y="2" width="1" height="1" fill="#404040"/><rect x="3" y="2" width="1" height="1" fill="#404040"/><rect x="4" y="2" width="1" height="1" fill="#fff"/><rect x="5" y="2" width="1" height="1" fill="#fff"/><rect x="6" y="2" width="1" height="1" fill="#fff"/><rect x="7" y="2" width="1" height="1" fill="#fff"/><rect x="8" y="2" width="1" height="1" fill="#404040"/><rect x="9" y="2" width="1" height="1" fill="#404040"/><rect x="10" y="2" width="1" height="1" fill="#fff"/><rect x="1" y="3" width="1" height="1" fill="#808080"/><rect x="2" y="3" width="1" height="1" fill="#404040"/><rect x="3" y="3" width="1" height="1" fill="#fff"/><rect x="4" y="3" width="1" height="1" fill="#fff"/><rect x="5" y="3" width="1" height="1" fill="#fff"/><rect x="6" y="3" width="1" height="1" fill="#fff"/><rect x="7" y="3" width="1" height="1" fill="#fff"/><rect x="8" y="3" width="1" height="1" fill="#fff"/><rect x="9" y="3" width="1" height="1" fill="#d4d0c8"/><rect x="10" y="3" width="1" height="1" fill="#fff"/><rect x="0" y="4" width="1" height="1" fill="#808080"/><rect x="1" y="4" width="1" height="1" fill="#404040"/><rect x="2" y="4" width="1" height="1" fill="#fff"/><rect x="3" y="4" width="1" height="1" fill="#fff"/><rect x="4" y="4" width="1" height="1" fill="#fff"/><rect x="5" y="4" width="1" height="1" fill="#fff"/><rect x="6" y="4" width="1" height="1" fill="#fff"/><rect x="7" y="4" width="1" height="1" fill="#fff"/><rect x="8" y="4" width="1" height="1" fill="#fff"/><rect x="9" y="4" width="1" height="1" fill="#fff"/><rect x="10" y="4" width="1" height="1" fill="#d4d0c8"/><rect x="11" y="4" width="1" height="1" fill="#fff"/><rect x="0" y="5" width="1" height="1" fill="#808080"/><rect x="1" y="5" width="1" height="1" fill="#404040"/><rect x="2" y="5" width="1" height="1" fill="#fff"/><rect x="3" y="5" width="1" height="1" fill="#fff"/><rect x="4" y="5" width="1" height="1" fill="#fff"/><rect x="5" y="5" width="1" height="1" fill="#fff"/><rect x="6" y="5" width="1" height="1" fill="#fff"/><rect x="7" y="5" width="1" height="1" fill="#fff"/><rect x="8" y="5" width="1" height="1" fill="#fff"/><rect x="9" y="5" width="1" height="1" fill="#fff"/><rect x="10" y="5" width="1" height="1" fill="#d4d0c8"/><rect x="11" y="5" width="1" height="1" fill="#fff"/><rect x="0" y="6" width="1" height="1" fill="#808080"/><rect x="1" y="6" width="1" height="1" fill="#404040"/><rect x="2" y="6" width="1" height="1" fill="#fff"/><rect x="3" y="6" width="1" height="1" fill="#fff"/><rect x="4" y="6" width="1" height="1" fill="#fff"/><rect x="5" y="6" width="1" height="1" fill="#fff"/><rect x="6" y="6" width="1" height="1" fill="#fff"/><rect x="7" y="6" width="1" height="1" fill="#fff"/><rect x="8" y="6" width="1" height="1" fill="#fff"/><rect x="9" y="6" width="1" height="1" fill="#fff"/><rect x="10" y="6" width="1" height="1" fill="#d4d0c8"/><rect x="11" y="6" width="1" height="1" fill="#fff"/><rect x="0" y="7" width="1" height="1" fill="#808080"/><rect x="1" y="7" width="1" height="1" fill="#404040"/><rect x="2" y="7" width="1" height="1" fill="#fff"/><rect x="3" y="7" width="1" height="1" fill="#fff"/><rect x="4" y="7" width="1" height="1" fill="#fff"/><rect x="5" y="7" width="1" height="1" fill="#fff"/><rect x="6" y="7" width="1" height="1" fill="#fff"/><rect x="7" y="7" width="1" height="1" fill="#fff"/><rect x="8" y="7" width="1" height="1" fill="#fff"/><rect x="9" y="7" width="1" height="1" fill="#fff"/><rect x="10" y="7" width="1" height="1" fill="#d4d0c8"/><rect x="11" y="7" width="1" height="1" fill="#fff"/><rect x="1" y="8" width="1" height="1" fill="#808080"/><rect x="2" y="8" width="1" height="1" fill="#404040"/><rect x="3" y="8" width="1" height="1" fill="#fff"/><rect x="4" y="8" width="1" height="1" fill="#fff"/><rect x="5" y="8" width="1" height="1" fill="#fff"/><rect x="6" y="8" width="1" height="1" fill="#fff"/><rect x="7" y="8" width="1" height="1" fill="#fff"/><rect x="8" y="8" width="1" height="1" fill="#fff"/><rect x="9" y="8" width="1" height="1" fill="#d4d0c8"/><rect x="10" y="8" width="1" height="1" fill="#fff"/><rect x="1" y="9" width="1" height="1" fill="#fff"/><rect x="2" y="9" width="1" height="1" fill="#d4d0c8"/><rect x="3" y="9" width="1" height="1" fill="#d4d0c8"/><rect x="4" y="9" width="1" height="1" fill="#fff"/><rect x="5" y="9" width="1" height="1" fill="#fff"/><rect x="6" y="9" width="1" height="1" fill="#fff"/><rect x="7" y="9" width="1" height="1" fill="#fff"/><rect x="8" y="9" width="1" height="1" fill="#d4d0c8"/><rect x="9" y="9" width="1" height="1" fill="#d4d0c8"/><rect x="10" y="9" width="1" height="1" fill="#fff"/><rect x="2" y="10" width="1" height="1" fill="#fff"/><rect x="3" y="10" width="1" height="1" fill="#fff"/><rect x="4" y="10" width="1" height="1" fill="#d4d0c8"/><rect x="5" y="10" width="1" height="1" fill="#d4d0c8"/><rect x="6" y="10" width="1" height="1" fill="#d4d0c8"/><rect x="7" y="10" width="1" height="1" fill="#d4d0c8"/><rect x="8" y="10" width="1" height="1" fill="#fff"/><rect x="9" y="10" width="1" height="1" fill="#fff"/><rect x="4" y="11" width="1" height="1" fill="#fff"/><rect x="5" y="11" width="1" height="1" fill="#fff"/><rect x="6" y="11" width="1" height="1" fill="#fff"/><rect x="7" y="11" width="1" height="1" fill="#fff"/></svg>
<svg class="a" style="left:15px;top:335px" width="12" height="12" shape-rendering="crispEdges"><rect x="4" y="0" width="1" height="1" fill="#808080"/><rect x="5" y="0" width="1" height="1" fill="#808080"/><rect x="6" y="0" width="1" height="1" fill="#808080"/><rect x="7" y="0" width="1" height="1" fill="#808080"/><rect x="2" y="1" width="1" height="1" fill="#808080"/><rect x="3" y="1" width="1" height="1" fill="#808080"/><rect x="4" y="1" width="1" height="1" fill="#404040"/><rect x="5" y="1" width="1" height="1" fill="#404040"/><rect x="6" y="1" width="1" height="1" fill="#404040"/><rect x="7" y="1" width="1" height="1" fill="#404040"/><rect x="8" y="1" width="1" height="1" fill="#808080"/><rect x="9" y="1" width="1" height="1" fill="#808080"/><rect x="1" y="2" width="1" height="1" fill="#808080"/><rect x="2" y="2" width="1" height="1" fill="#404040"/><rect x="3" y="2" width="1" height="1" fill="#404040"/><rect x="4" y="2" width="1" height="1" fill="#fff"/><rect x="5" y="2" width="1" height="1" fill="#fff"/><rect x="6" y="2" width="1" height="1" fill="#fff"/><rect x="7" y="2" width="1" height="1" fill="#fff"/><rect x="8" y="2" width="1" height="1" fill="#404040"/><rect x="9" y="2" width="1" height="1" fill="#404040"/><rect x="10" y="2" width="1" height="1" fill="#fff"/><rect x="1" y="3" width="1" height="1" fill="#808080"/><rect x="2" y="3" width="1" height="1" fill="#404040"/><rect x="3" y="3" width="1" height="1" fill="#fff"/><rect x="4" y="3" width="1" height="1" fill="#fff"/><rect x="5" y="3" width="1" height="1" fill="#fff"/><rect x="6" y="3" width="1" height="1" fill="#fff"/><rect x="7" y="3" width="1" height="1" fill="#fff"/><rect x="8" y="3" width="1" height="1" fill="#fff"/><rect x="9" y="3" width="1" height="1" fill="#d4d0c8"/><rect x="10" y="3" width="1" height="1" fill="#fff"/><rect x="0" y="4" width="1" height="1" fill="#808080"/><rect x="1" y="4" width="1" height="1" fill="#404040"/><rect x="2" y="4" width="1" height="1" fill="#fff"/><rect x="3" y="4" width="1" height="1" fill="#fff"/><rect x="4" y="4" width="1" height="1" fill="#fff"/><rect x="5" y="4" width="1" height="1" fill="#fff"/><rect x="6" y="4" width="1" height="1" fill="#fff"/><rect x="7" y="4" width="1" height="1" fill="#fff"/><rect x="8" y="4" width="1" height="1" fill="#fff"/><rect x="9" y="4" width="1" height="1" fill="#fff"/><rect x="10" y="4" width="1" height="1" fill="#d4d0c8"/><rect x="11" y="4" width="1" height="1" fill="#fff"/><rect x="0" y="5" width="1" height="1" fill="#808080"/><rect x="1" y="5" width="1" height="1" fill="#404040"/><rect x="2" y="5" width="1" height="1" fill="#fff"/><rect x="3" y="5" width="1" height="1" fill="#fff"/><rect x="4" y="5" width="1" height="1" fill="#fff"/><rect x="5" y="5" width="1" height="1" fill="#fff"/><rect x="6" y="5" width="1" height="1" fill="#fff"/><rect x="7" y="5" width="1" height="1" fill="#fff"/><rect x="8" y="5" width="1" height="1" fill="#fff"/><rect x="9" y="5" width="1" height="1" fill="#fff"/><rect x="10" y="5" width="1" height="1" fill="#d4d0c8"/><rect x="11" y="5" width="1" height="1" fill="#fff"/><rect x="0" y="6" width="1" height="1" fill="#808080"/><rect x="1" y="6" width="1" height="1" fill="#404040"/><rect x="2" y="6" width="1" height="1" fill="#fff"/><rect x="3" y="6" width="1" height="1" fill="#fff"/><rect x="4" y="6" width="1" height="1" fill="#fff"/><rect x="5" y="6" width="1" height="1" fill="#fff"/><rect x="6" y="6" width="1" height="1" fill="#fff"/><rect x="7" y="6" width="1" height="1" fill="#fff"/><rect x="8" y="6" width="1" height="1" fill="#fff"/><rect x="9" y="6" width="1" height="1" fill="#fff"/><rect x="10" y="6" width="1" height="1" fill="#d4d0c8"/><rect x="11" y="6" width="1" height="1" fill="#fff"/><rect x="0" y="7" width="1" height="1" fill="#808080"/><rect x="1" y="7" width="1" height="1" fill="#404040"/><rect x="2" y="7" width="1" height="1" fill="#fff"/><rect x="3" y="7" width="1" height="1" fill="#fff"/><rect x="4" y="7" width="1" height="1" fill="#fff"/><rect x="5" y="7" width="1" height="1" fill="#fff"/><rect x="6" y="7" width="1" height="1" fill="#fff"/><rect x="7" y="7" width="1" height="1" fill="#fff"/><rect x="8" y="7" width="1" height="1" fill="#fff"/><rect x="9" y="7" width="1" height="1" fill="#fff"/><rect x="10" y="7" width="1" height="1" fill="#d4d0c8"/><rect x="11" y="7" width="1" height="1" fill="#fff"/><rect x="1" y="8" width="1" height="1" fill="#808080"/><rect x="2" y="8" width="1" height="1" fill="#404040"/><rect x="3" y="8" width="1" height="1" fill="#fff"/><rect x="4" y="8" width="1" height="1" fill="#fff"/><rect x="5" y="8" width="1" height="1" fill="#fff"/><rect x="6" y="8" width="1" height="1" fill="#fff"/><rect x="7" y="8" width="1" height="1" fill="#fff"/><rect x="8" y="8" width="1" height="1" fill="#fff"/><rect x="9" y="8" width="1" height="1" fill="#d4d0c8"/><rect x="10" y="8" width="1" height="1" fill="#fff"/><rect x="1" y="9" width="1" height="1" fill="#fff"/><rect x="2" y="9" width="1" height="1" fill="#d4d0c8"/><rect x="3" y="9" width="1" height="1" fill="#d4d0c8"/><rect x="4" y="9" width="1" height="1" fill="#fff"/><rect x="5" y="9" width="1" height="1" fill="#fff"/><rect x="6" y="9" width="1" height="1" fill="#fff"/><rect x="7" y="9" width="1" height="1" fill="#fff"/><rect x="8" y="9" width="1" height="1" fill="#d4d0c8"/><rect x="9" y="9" width="1" height="1" fill="#d4d0c8"/><rect x="10" y="9" width="1" height="1" fill="#fff"/><rect x="2" y="10" width="1" height="1" fill="#fff"/><rect x="3" y="10" width="1" height="1" fill="#fff"/><rect x="4" y="10" width="1" height="1" fill="#d4d0c8"/><rect x="5" y="10" width="1" height="1" fill="#d4d0c8"/><rect x="6" y="10" width="1" height="1" fill="#d4d0c8"/><rect x="7" y="10" width="1" height="1" fill="#d4d0c8"/><rect x="8" y="10" width="1" height="1" fill="#fff"/><rect x="9" y="10" width="1" height="1" fill="#fff"/><rect x="4" y="11" width="1" height="1" fill="#fff"/><rect x="5" y="11" width="1" height="1" fill="#fff"/><rect x="6" y="11" width="1" height="1" fill="#fff"/><rect x="7" y="11" width="1" height="1" fill="#fff"/><rect x="5" y="4" width="2" height="4" fill="#000"/><rect x="4" y="5" width="4" height="2" fill="#000"/></svg>
<svg class="a" style="left:15px;top:358px" width="12" height="12" shape-rendering="crispEdges"><rect x="4" y="0" width="1" height="1" fill="#808080"/><rect x="5" y="0" width="1" height="1" fill="#808080"/><rect x="6" y="0" width="1" height="1" fill="#808080"/><rect x="7" y="0" width="1" height="1" fill="#808080"/><rect x="2" y="1" width="1" height="1" fill="#808080"/><rect x="3" y="1" width="1" height="1" fill="#808080"/><rect x="4" y="1" width="1" height="1" fill="#404040"/><rect x="5" y="1" width="1" height="1" fill="#404040"/><rect x="6" y="1" width="1" height="1" fill="#404040"/><rect x="7" y="1" width="1" height="1" fill="#404040"/><rect x="8" y="1" width="1" height="1" fill="#808080"/><rect x="9" y="1" width="1" height="1" fill="#808080"/><rect x="1" y="2" width="1" height="1" fill="#808080"/><rect x="2" y="2" width="1" height="1" fill="#404040"/><rect x="3" y="2" width="1" height="1" fill="#404040"/><rect x="4" y="2" width="1" height="1" fill="#fff"/><rect x="5" y="2" width="1" height="1" fill="#fff"/><rect x="6" y="2" width="1" height="1" fill="#fff"/><rect x="7" y="2" width="1" height="1" fill="#fff"/><rect x="8" y="2" width="1" height="1" fill="#404040"/><rect x="9" y="2" width="1" height="1" fill="#404040"/><rect x="10" y="2" width="1" height="1" fill="#fff"/><rect x="1" y="3" width="1" height="1" fill="#808080"/><rect x="2" y="3" width="1" height="1" fill="#404040"/><rect x="3" y="3" width="1" height="1" fill="#fff"/><rect x="4" y="3" width="1" height="1" fill="#fff"/><rect x="5" y="3" width="1" height="1" fill="#fff"/><rect x="6" y="3" width="1" height="1" fill="#fff"/><rect x="7" y="3" width="1" height="1" fill="#fff"/><rect x="8" y="3" width="1" height="1" fill="#fff"/><rect x="9" y="3" width="1" height="1" fill="#d4d0c8"/><rect x="10" y="3" width="1" height="1" fill="#fff"/><rect x="0" y="4" width="1" height="1" fill="#808080"/><rect x="1" y="4" width="1" height="1" fill="#404040"/><rect x="2" y="4" width="1" height="1" fill="#fff"/><rect x="3" y="4" width="1" height="1" fill="#fff"/><rect x="4" y="4" width="1" height="1" fill="#fff"/><rect x="5" y="4" width="1" height="1" fill="#fff"/><rect x="6" y="4" width="1" height="1" fill="#fff"/><rect x="7" y="4" width="1" height="1" fill="#fff"/><rect x="8" y="4" width="1" height="1" fill="#fff"/><rect x="9" y="4" width="1" height="1" fill="#fff"/><rect x="10" y="4" width="1" height="1" fill="#d4d0c8"/><rect x="11" y="4" width="1" height="1" fill="#fff"/><rect x="0" y="5" width="1" height="1" fill="#808080"/><rect x="1" y="5" width="1" height="1" fill="#404040"/><rect x="2" y="5" width="1" height="1" fill="#fff"/><rect x="3" y="5" width="1" height="1" fill="#fff"/><rect x="4" y="5" width="1" height="1" fill="#fff"/><rect x="5" y="5" width="1" height="1" fill="#fff"/><rect x="6" y="5" width="1" height="1" fill="#fff"/><rect x="7" y="5" width="1" height="1" fill="#fff"/><rect x="8" y="5" width="1" height="1" fill="#fff"/><rect x="9" y="5" width="1" height="1" fill="#fff"/><rect x="10" y="5" width="1" height="1" fill="#d4d0c8"/><rect x="11" y="5" width="1" height="1" fill="#fff"/><rect x="0" y="6" width="1" height="1" fill="#808080"/><rect x="1" y="6" width="1" height="1" fill="#404040"/><rect x="2" y="6" width="1" height="1" fill="#fff"/><rect x="3" y="6" width="1" height="1" fill="#fff"/><rect x="4" y="6" width="1" height="1" fill="#fff"/><rect x="5" y="6" width="1" height="1" fill="#fff"/><rect x="6" y="6" width="1" height="1" fill="#fff"/><rect x="7" y="6" width="1" height="1" fill="#fff"/><rect x="8" y="6" width="1" height="1" fill="#fff"/><rect x="9" y="6" width="1" height="1" fill="#fff"/><rect x="10" y="6" width="1" height="1" fill="#d4d0c8"/><rect x="11" y="6" width="1" height="1" fill="#fff"/><rect x="0" y="7" width="1" height="1" fill="#808080"/><rect x="1" y="7" width="1" height="1" fill="#404040"/><rect x="2" y="7" width="1" height="1" fill="#fff"/><rect x="3" y="7" width="1" height="1" fill="#fff"/><rect x="4" y="7" width="1" height="1" fill="#fff"/><rect x="5" y="7" width="1" height="1" fill="#fff"/><rect x="6" y="7" width="1" height="1" fill="#fff"/><rect x="7" y="7" width="1" height="1" fill="#fff"/><rect x="8" y="7" width="1" height="1" fill="#fff"/><rect x="9" y="7" width="1" height="1" fill="#fff"/><rect x="10" y="7" width="1" height="1" fill="#d4d0c8"/><rect x="11" y="7" width="1" height="1" fill="#fff"/><rect x="1" y="8" width="1" height="1" fill="#808080"/><rect x="2" y="8" width="1" height="1" fill="#404040"/><rect x="3" y="8" width="1" height="1" fill="#fff"/><rect x="4" y="8" width="1" height="1" fill="#fff"/><rect x="5" y="8" width="1" height="1" fill="#fff"/><rect x="6" y="8" width="1" height="1" fill="#fff"/><rect x="7" y="8" width="1" height="1" fill="#fff"/><rect x="8" y="8" width="1" height="1" fill="#fff"/><rect x="9" y="8" width="1" height="1" fill="#d4d0c8"/><rect x="10" y="8" width="1" height="1" fill="#fff"/><rect x="1" y="9" width="1" height="1" fill="#fff"/><rect x="2" y="9" width="1" height="1" fill="#d4d0c8"/><rect x="3" y="9" width="1" height="1" fill="#d4d0c8"/><rect x="4" y="9" width="1" height="1" fill="#fff"/><rect x="5" y="9" width="1" height="1" fill="#fff"/><rect x="6" y="9" width="1" height="1" fill="#fff"/><rect x="7" y="9" width="1" height="1" fill="#fff"/><rect x="8" y="9" width="1" height="1" fill="#d4d0c8"/><rect x="9" y="9" width="1" height="1" fill="#d4d0c8"/><rect x="10" y="9" width="1" height="1" fill="#fff"/><rect x="2" y="10" width="1" height="1" fill="#fff"/><rect x="3" y="10" width="1" height="1" fill="#fff"/><rect x="4" y="10" width="1" height="1" fill="#d4d0c8"/><rect x="5" y="10" width="1" height="1" fill="#d4d0c8"/><rect x="6" y="10" width="1" height="1" fill="#d4d0c8"/><rect x="7" y="10" width="1" height="1" fill="#d4d0c8"/><rect x="8" y="10" width="1" height="1" fill="#fff"/><rect x="9" y="10" width="1" height="1" fill="#fff"/><rect x="4" y="11" width="1" height="1" fill="#fff"/><rect x="5" y="11" width="1" height="1" fill="#fff"/><rect x="6" y="11" width="1" height="1" fill="#fff"/><rect x="7" y="11" width="1" height="1" fill="#fff"/></svg>
<svg class="a" style="left:15px;top:381px" width="12" height="12" shape-rendering="crispEdges"><rect x="4" y="0" width="1" height="1" fill="#808080"/><rect x="5" y="0" width="1" height="1" fill="#808080"/><rect x="6" y="0" width="1" height="1" fill="#808080"/><rect x="7" y="0" width="1" height="1" fill="#808080"/><rect x="2" y="1" width="1" height="1" fill="#808080"/><rect x="3" y="1" width="1" height="1" fill="#808080"/><rect x="4" y="1" width="1" height="1" fill="#404040"/><rect x="5" y="1" width="1" height="1" fill="#404040"/><rect x="6" y="1" width="1" height="1" fill="#404040"/><rect x="7" y="1" width="1" height="1" fill="#404040"/><rect x="8" y="1" width="1" height="1" fill="#808080"/><rect x="9" y="1" width="1" height="1" fill="#808080"/><rect x="1" y="2" width="1" height="1" fill="#808080"/><rect x="2" y="2" width="1" height="1" fill="#404040"/><rect x="3" y="2" width="1" height="1" fill="#404040"/><rect x="4" y="2" width="1" height="1" fill="#fff"/><rect x="5" y="2" width="1" height="1" fill="#fff"/><rect x="6" y="2" width="1" height="1" fill="#fff"/><rect x="7" y="2" width="1" height="1" fill="#fff"/><rect x="8" y="2" width="1" height="1" fill="#404040"/><rect x="9" y="2" width="1" height="1" fill="#404040"/><rect x="10" y="2" width="1" height="1" fill="#fff"/><rect x="1" y="3" width="1" height="1" fill="#808080"/><rect x="2" y="3" width="1" height="1" fill="#404040"/><rect x="3" y="3" width="1" height="1" fill="#fff"/><rect x="4" y="3" width="1" height="1" fill="#fff"/><rect x="5" y="3" width="1" height="1" fill="#fff"/><rect x="6" y="3" width="1" height="1" fill="#fff"/><rect x="7" y="3" width="1" height="1" fill="#fff"/><rect x="8" y="3" width="1" height="1" fill="#fff"/><rect x="9" y="3" width="1" height="1" fill="#d4d0c8"/><rect x="10" y="3" width="1" height="1" fill="#fff"/><rect x="0" y="4" width="1" height="1" fill="#808080"/><rect x="1" y="4" width="1" height="1" fill="#404040"/><rect x="2" y="4" width="1" height="1" fill="#fff"/><rect x="3" y="4" width="1" height="1" fill="#fff"/><rect x="4" y="4" width="1" height="1" fill="#fff"/><rect x="5" y="4" width="1" height="1" fill="#fff"/><rect x="6" y="4" width="1" height="1" fill="#fff"/><rect x="7" y="4" width="1" height="1" fill="#fff"/><rect x="8" y="4" width="1" height="1" fill="#fff"/><rect x="9" y="4" width="1" height="1" fill="#fff"/><rect x="10" y="4" width="1" height="1" fill="#d4d0c8"/><rect x="11" y="4" width="1" height="1" fill="#fff"/><rect x="0" y="5" width="1" height="1" fill="#808080"/><rect x="1" y="5" width="1" height="1" fill="#404040"/><rect x="2" y="5" width="1" height="1" fill="#fff"/><rect x="3" y="5" width="1" height="1" fill="#fff"/><rect x="4" y="5" width="1" height="1" fill="#fff"/><rect x="5" y="5" width="1" height="1" fill="#fff"/><rect x="6" y="5" width="1" height="1" fill="#fff"/><rect x="7" y="5" width="1" height="1" fill="#fff"/><rect x="8" y="5" width="1" height="1" fill="#fff"/><rect x="9" y="5" width="1" height="1" fill="#fff"/><rect x="10" y="5" width="1" height="1" fill="#d4d0c8"/><rect x="11" y="5" width="1" height="1" fill="#fff"/><rect x="0" y="6" width="1" height="1" fill="#808080"/><rect x="1" y="6" width="1" height="1" fill="#404040"/><rect x="2" y="6" width="1" height="1" fill="#fff"/><rect x="3" y="6" width="1" height="1" fill="#fff"/><rect x="4" y="6" width="1" height="1" fill="#fff"/><rect x="5" y="6" width="1" height="1" fill="#fff"/><rect x="6" y="6" width="1" height="1" fill="#fff"/><rect x="7" y="6" width="1" height="1" fill="#fff"/><rect x="8" y="6" width="1" height="1" fill="#fff"/><rect x="9" y="6" width="1" height="1" fill="#fff"/><rect x="10" y="6" width="1" height="1" fill="#d4d0c8"/><rect x="11" y="6" width="1" height="1" fill="#fff"/><rect x="0" y="7" width="1" height="1" fill="#808080"/><rect x="1" y="7" width="1" height="1" fill="#404040"/><rect x="2" y="7" width="1" height="1" fill="#fff"/><rect x="3" y="7" width="1" height="1" fill="#fff"/><rect x="4" y="7" width="1" height="1" fill="#fff"/><rect x="5" y="7" width="1" height="1" fill="#fff"/><rect x="6" y="7" width="1" height="1" fill="#fff"/><rect x="7" y="7" width="1" height="1" fill="#fff"/><rect x="8" y="7" width="1" height="1" fill="#fff"/><rect x="9" y="7" width="1" height="1" fill="#fff"/><rect x="10" y="7" width="1" height="1" fill="#d4d0c8"/><rect x="11" y="7" width="1" height="1" fill="#fff"/><rect x="1" y="8" width="1" height="1" fill="#808080"/><rect x="2" y="8" width="1" height="1" fill="#404040"/><rect x="3" y="8" width="1" height="1" fill="#fff"/><rect x="4" y="8" width="1" height="1" fill="#fff"/><rect x="5" y="8" width="1" height="1" fill="#fff"/><rect x="6" y="8" width="1" height="1" fill="#fff"/><rect x="7" y="8" width="1" height="1" fill="#fff"/><rect x="8" y="8" width="1" height="1" fill="#fff"/><rect x="9" y="8" width="1" height="1" fill="#d4d0c8"/><rect x="10" y="8" width="1" height="1" fill="#fff"/><rect x="1" y="9" width="1" height="1" fill="#fff"/><rect x="2" y="9" width="1" height="1" fill="#d4d0c8"/><rect x="3" y="9" width="1" height="1" fill="#d4d0c8"/><rect x="4" y="9" width="1" height="1" fill="#fff"/><rect x="5" y="9" width="1" height="1" fill="#fff"/><rect x="6" y="9" width="1" height="1" fill="#fff"/><rect x="7" y="9" width="1" height="1" fill="#fff"/><rect x="8" y="9" width="1" height="1" fill="#d4d0c8"/><rect x="9" y="9" width="1" height="1" fill="#d4d0c8"/><rect x="10" y="9" width="1" height="1" fill="#fff"/><rect x="2" y="10" width="1" height="1" fill="#fff"/><rect x="3" y="10" width="1" height="1" fill="#fff"/><rect x="4" y="10" width="1" height="1" fill="#d4d0c8"/><rect x="5" y="10" width="1" height="1" fill="#d4d0c8"/><rect x="6" y="10" width="1" height="1" fill="#d4d0c8"/><rect x="7" y="10" width="1" height="1" fill="#d4d0c8"/><rect x="8" y="10" width="1" height="1" fill="#fff"/><rect x="9" y="10" width="1" height="1" fill="#fff"/><rect x="4" y="11" width="1" height="1" fill="#fff"/><rect x="5" y="11" width="1" height="1" fill="#fff"/><rect x="6" y="11" width="1" height="1" fill="#fff"/><rect x="7" y="11" width="1" height="1" fill="#fff"/></svg>
<div class="btn" style="left:9px;top:411px;width:175px;height:23px;"></div>
<div class="btn" style="left:9px;top:440px;width:175px;height:23px;"></div>
<div class="btn" style="left:9px;top:469px;width:175px;height:23px;"></div>
<div class="btn" style="left:9px;top:498px;width:175px;height:23px;"></div>
<div class="btn" style="left:9px;top:575px;width:174px;height:23px;"></div>
<div class="btn" style="left:9px;top:604px;width:174px;height:23px;"></div>
<div class="btn" style="left:7px;top:633px;width:174px;height:23px;"></div>
<div class="btn" style="left:9px;top:662px;width:174px;height:23px;"></div>
<div class="btn" style="left:9px;top:713px;width:174px;height:23px;"></div>
<div class="" style="left:208px;top:78px;width:947px;height:310px;background:#fff"></div>
<div class="" style="left:239px;top:393px;width:1037px;height:311px;background:#fff"></div>
<div class="" style="left:239px;top:709px;width:1037px;height:311px;background:#fff"></div>
<div class="" style="left:209px;top:78px;width:16px;height:285px;background:linear-gradient(to bottom,#ff0000,#ffff00 25%,#00ff00 50%,#00ffff 75%,#0000ff)"></div>
<div class="grp" style="left:1163px;top:86px;width:109px;height:64px"></div>
<div class="" style="left:1172px;top:80px;width:34px;height:12px;background:#d4d0c8"></div>
<svg class="a" style="left:1168px;top:98px" width="12" height="12" shape-rendering="crispEdges"><rect x="4" y="0" width="1" height="1" fill="#808080"/><rect x="5" y="0" width="1" height="1" fill="#808080"/><rect x="6" y="0" width="1" height="1" fill="#808080"/><rect x="7" y="0" width="1" height="1" fill="#808080"/><rect x="2" y="1" width="1" height="1" fill="#808080"/><rect x="3" y="1" width="1" height="1" fill="#808080"/><rect x="4" y="1" width="1" height="1" fill="#404040"/><rect x="5" y="1" width="1" height="1" fill="#404040"/><rect x="6" y="1" width="1" height="1" fill="#404040"/><rect x="7" y="1" width="1" height="1" fill="#404040"/><rect x="8" y="1" width="1" height="1" fill="#808080"/><rect x="9" y="1" width="1" height="1" fill="#808080"/><rect x="1" y="2" width="1" height="1" fill="#808080"/><rect x="2" y="2" width="1" height="1" fill="#404040"/><rect x="3" y="2" width="1" height="1" fill="#404040"/><rect x="4" y="2" width="1" height="1" fill="#fff"/><rect x="5" y="2" width="1" height="1" fill="#fff"/><rect x="6" y="2" width="1" height="1" fill="#fff"/><rect x="7" y="2" width="1" height="1" fill="#fff"/><rect x="8" y="2" width="1" height="1" fill="#404040"/><rect x="9" y="2" width="1" height="1" fill="#404040"/><rect x="10" y="2" width="1" height="1" fill="#fff"/><rect x="1" y="3" width="1" height="1" fill="#808080"/><rect x="2" y="3" width="1" height="1" fill="#404040"/><rect x="3" y="3" width="1" height="1" fill="#fff"/><rect x="4" y="3" width="1" height="1" fill="#fff"/><rect x="5" y="3" width="1" height="1" fill="#fff"/><rect x="6" y="3" width="1" height="1" fill="#fff"/><rect x="7" y="3" width="1" height="1" fill="#fff"/><rect x="8" y="3" width="1" height="1" fill="#fff"/><rect x="9" y="3" width="1" height="1" fill="#d4d0c8"/><rect x="10" y="3" width="1" height="1" fill="#fff"/><rect x="0" y="4" width="1" height="1" fill="#808080"/><rect x="1" y="4" width="1" height="1" fill="#404040"/><rect x="2" y="4" width="1" height="1" fill="#fff"/><rect x="3" y="4" width="1" height="1" fill="#fff"/><rect x="4" y="4" width="1" height="1" fill="#fff"/><rect x="5" y="4" width="1" height="1" fill="#fff"/><rect x="6" y="4" width="1" height="1" fill="#fff"/><rect x="7" y="4" width="1" height="1" fill="#fff"/><rect x="8" y="4" width="1" height="1" fill="#fff"/><rect x="9" y="4" width="1" height="1" fill="#fff"/><rect x="10" y="4" width="1" height="1" fill="#d4d0c8"/><rect x="11" y="4" width="1" height="1" fill="#fff"/><rect x="0" y="5" width="1" height="1" fill="#808080"/><rect x="1" y="5" width="1" height="1" fill="#404040"/><rect x="2" y="5" width="1" height="1" fill="#fff"/><rect x="3" y="5" width="1" height="1" fill="#fff"/><rect x="4" y="5" width="1" height="1" fill="#fff"/><rect x="5" y="5" width="1" height="1" fill="#fff"/><rect x="6" y="5" width="1" height="1" fill="#fff"/><rect x="7" y="5" width="1" height="1" fill="#fff"/><rect x="8" y="5" width="1" height="1" fill="#fff"/><rect x="9" y="5" width="1" height="1" fill="#fff"/><rect x="10" y="5" width="1" height="1" fill="#d4d0c8"/><rect x="11" y="5" width="1" height="1" fill="#fff"/><rect x="0" y="6" width="1" height="1" fill="#808080"/><rect x="1" y="6" width="1" height="1" fill="#404040"/><rect x="2" y="6" width="1" height="1" fill="#fff"/><rect x="3" y="6" width="1" height="1" fill="#fff"/><rect x="4" y="6" width="1" height="1" fill="#fff"/><rect x="5" y="6" width="1" height="1" fill="#fff"/><rect x="6" y="6" width="1" height="1" fill="#fff"/><rect x="7" y="6" width="1" height="1" fill="#fff"/><rect x="8" y="6" width="1" height="1" fill="#fff"/><rect x="9" y="6" width="1" height="1" fill="#fff"/><rect x="10" y="6" width="1" height="1" fill="#d4d0c8"/><rect x="11" y="6" width="1" height="1" fill="#fff"/><rect x="0" y="7" width="1" height="1" fill="#808080"/><rect x="1" y="7" width="1" height="1" fill="#404040"/><rect x="2" y="7" width="1" height="1" fill="#fff"/><rect x="3" y="7" width="1" height="1" fill="#fff"/><rect x="4" y="7" width="1" height="1" fill="#fff"/><rect x="5" y="7" width="1" height="1" fill="#fff"/><rect x="6" y="7" width="1" height="1" fill="#fff"/><rect x="7" y="7" width="1" height="1" fill="#fff"/><rect x="8" y="7" width="1" height="1" fill="#fff"/><rect x="9" y="7" width="1" height="1" fill="#fff"/><rect x="10" y="7" width="1" height="1" fill="#d4d0c8"/><rect x="11" y="7" width="1" height="1" fill="#fff"/><rect x="1" y="8" width="1" height="1" fill="#808080"/><rect x="2" y="8" width="1" height="1" fill="#404040"/><rect x="3" y="8" width="1" height="1" fill="#fff"/><rect x="4" y="8" width="1" height="1" fill="#fff"/><rect x="5" y="8" width="1" height="1" fill="#fff"/><rect x="6" y="8" width="1" height="1" fill="#fff"/><rect x="7" y="8" width="1" height="1" fill="#fff"/><rect x="8" y="8" width="1" height="1" fill="#fff"/><rect x="9" y="8" width="1" height="1" fill="#d4d0c8"/><rect x="10" y="8" width="1" height="1" fill="#fff"/><rect x="1" y="9" width="1" height="1" fill="#fff"/><rect x="2" y="9" width="1" height="1" fill="#d4d0c8"/><rect x="3" y="9" width="1" height="1" fill="#d4d0c8"/><rect x="4" y="9" width="1" height="1" fill="#fff"/><rect x="5" y="9" width="1" height="1" fill="#fff"/><rect x="6" y="9" width="1" height="1" fill="#fff"/><rect x="7" y="9" width="1" height="1" fill="#fff"/><rect x="8" y="9" width="1" height="1" fill="#d4d0c8"/><rect x="9" y="9" width="1" height="1" fill="#d4d0c8"/><rect x="10" y="9" width="1" height="1" fill="#fff"/><rect x="2" y="10" width="1" height="1" fill="#fff"/><rect x="3" y="10" width="1" height="1" fill="#fff"/><rect x="4" y="10" width="1" height="1" fill="#d4d0c8"/><rect x="5" y="10" width="1" height="1" fill="#d4d0c8"/><rect x="6" y="10" width="1" height="1" fill="#d4d0c8"/><rect x="7" y="10" width="1" height="1" fill="#d4d0c8"/><rect x="8" y="10" width="1" height="1" fill="#fff"/><rect x="9" y="10" width="1" height="1" fill="#fff"/><rect x="4" y="11" width="1" height="1" fill="#fff"/><rect x="5" y="11" width="1" height="1" fill="#fff"/><rect x="6" y="11" width="1" height="1" fill="#fff"/><rect x="7" y="11" width="1" height="1" fill="#fff"/></svg>
<svg class="a" style="left:1168px;top:118px" width="12" height="12" shape-rendering="crispEdges"><rect x="4" y="0" width="1" height="1" fill="#808080"/><rect x="5" y="0" width="1" height="1" fill="#808080"/><rect x="6" y="0" width="1" height="1" fill="#808080"/><rect x="7" y="0" width="1" height="1" fill="#808080"/><rect x="2" y="1" width="1" height="1" fill="#808080"/><rect x="3" y="1" width="1" height="1" fill="#808080"/><rect x="4" y="1" width="1" height="1" fill="#404040"/><rect x="5" y="1" width="1" height="1" fill="#404040"/><rect x="6" y="1" width="1" height="1" fill="#404040"/><rect x="7" y="1" width="1" height="1" fill="#404040"/><rect x="8" y="1" width="1" height="1" fill="#808080"/><rect x="9" y="1" width="1" height="1" fill="#808080"/><rect x="1" y="2" width="1" height="1" fill="#808080"/><rect x="2" y="2" width="1" height="1" fill="#404040"/><rect x="3" y="2" width="1" height="1" fill="#404040"/><rect x="4" y="2" width="1" height="1" fill="#fff"/><rect x="5" y="2" width="1" height="1" fill="#fff"/><rect x="6" y="2" width="1" height="1" fill="#fff"/><rect x="7" y="2" width="1" height="1" fill="#fff"/><rect x="8" y="2" width="1" height="1" fill="#404040"/><rect x="9" y="2" width="1" height="1" fill="#404040"/><rect x="10" y="2" width="1" height="1" fill="#fff"/><rect x="1" y="3" width="1" height="1" fill="#808080"/><rect x="2" y="3" width="1" height="1" fill="#404040"/><rect x="3" y="3" width="1" height="1" fill="#fff"/><rect x="4" y="3" width="1" height="1" fill="#fff"/><rect x="5" y="3" width="1" height="1" fill="#fff"/><rect x="6" y="3" width="1" height="1" fill="#fff"/><rect x="7" y="3" width="1" height="1" fill="#fff"/><rect x="8" y="3" width="1" height="1" fill="#fff"/><rect x="9" y="3" width="1" height="1" fill="#d4d0c8"/><rect x="10" y="3" width="1" height="1" fill="#fff"/><rect x="0" y="4" width="1" height="1" fill="#808080"/><rect x="1" y="4" width="1" height="1" fill="#404040"/><rect x="2" y="4" width="1" height="1" fill="#fff"/><rect x="3" y="4" width="1" height="1" fill="#fff"/><rect x="4" y="4" width="1" height="1" fill="#fff"/><rect x="5" y="4" width="1" height="1" fill="#fff"/><rect x="6" y="4" width="1" height="1" fill="#fff"/><rect x="7" y="4" width="1" height="1" fill="#fff"/><rect x="8" y="4" width="1" height="1" fill="#fff"/><rect x="9" y="4" width="1" height="1" fill="#fff"/><rect x="10" y="4" width="1" height="1" fill="#d4d0c8"/><rect x="11" y="4" width="1" height="1" fill="#fff"/><rect x="0" y="5" width="1" height="1" fill="#808080"/><rect x="1" y="5" width="1" height="1" fill="#404040"/><rect x="2" y="5" width="1" height="1" fill="#fff"/><rect x="3" y="5" width="1" height="1" fill="#fff"/><rect x="4" y="5" width="1" height="1" fill="#fff"/><rect x="5" y="5" width="1" height="1" fill="#fff"/><rect x="6" y="5" width="1" height="1" fill="#fff"/><rect x="7" y="5" width="1" height="1" fill="#fff"/><rect x="8" y="5" width="1" height="1" fill="#fff"/><rect x="9" y="5" width="1" height="1" fill="#fff"/><rect x="10" y="5" width="1" height="1" fill="#d4d0c8"/><rect x="11" y="5" width="1" height="1" fill="#fff"/><rect x="0" y="6" width="1" height="1" fill="#808080"/><rect x="1" y="6" width="1" height="1" fill="#404040"/><rect x="2" y="6" width="1" height="1" fill="#fff"/><rect x="3" y="6" width="1" height="1" fill="#fff"/><rect x="4" y="6" width="1" height="1" fill="#fff"/><rect x="5" y="6" width="1" height="1" fill="#fff"/><rect x="6" y="6" width="1" height="1" fill="#fff"/><rect x="7" y="6" width="1" height="1" fill="#fff"/><rect x="8" y="6" width="1" height="1" fill="#fff"/><rect x="9" y="6" width="1" height="1" fill="#fff"/><rect x="10" y="6" width="1" height="1" fill="#d4d0c8"/><rect x="11" y="6" width="1" height="1" fill="#fff"/><rect x="0" y="7" width="1" height="1" fill="#808080"/><rect x="1" y="7" width="1" height="1" fill="#404040"/><rect x="2" y="7" width="1" height="1" fill="#fff"/><rect x="3" y="7" width="1" height="1" fill="#fff"/><rect x="4" y="7" width="1" height="1" fill="#fff"/><rect x="5" y="7" width="1" height="1" fill="#fff"/><rect x="6" y="7" width="1" height="1" fill="#fff"/><rect x="7" y="7" width="1" height="1" fill="#fff"/><rect x="8" y="7" width="1" height="1" fill="#fff"/><rect x="9" y="7" width="1" height="1" fill="#fff"/><rect x="10" y="7" width="1" height="1" fill="#d4d0c8"/><rect x="11" y="7" width="1" height="1" fill="#fff"/><rect x="1" y="8" width="1" height="1" fill="#808080"/><rect x="2" y="8" width="1" height="1" fill="#404040"/><rect x="3" y="8" width="1" height="1" fill="#fff"/><rect x="4" y="8" width="1" height="1" fill="#fff"/><rect x="5" y="8" width="1" height="1" fill="#fff"/><rect x="6" y="8" width="1" height="1" fill="#fff"/><rect x="7" y="8" width="1" height="1" fill="#fff"/><rect x="8" y="8" width="1" height="1" fill="#fff"/><rect x="9" y="8" width="1" height="1" fill="#d4d0c8"/><rect x="10" y="8" width="1" height="1" fill="#fff"/><rect x="1" y="9" width="1" height="1" fill="#fff"/><rect x="2" y="9" width="1" height="1" fill="#d4d0c8"/><rect x="3" y="9" width="1" height="1" fill="#d4d0c8"/><rect x="4" y="9" width="1" height="1" fill="#fff"/><rect x="5" y="9" width="1" height="1" fill="#fff"/><rect x="6" y="9" width="1" height="1" fill="#fff"/><rect x="7" y="9" width="1" height="1" fill="#fff"/><rect x="8" y="9" width="1" height="1" fill="#d4d0c8"/><rect x="9" y="9" width="1" height="1" fill="#d4d0c8"/><rect x="10" y="9" width="1" height="1" fill="#fff"/><rect x="2" y="10" width="1" height="1" fill="#fff"/><rect x="3" y="10" width="1" height="1" fill="#fff"/><rect x="4" y="10" width="1" height="1" fill="#d4d0c8"/><rect x="5" y="10" width="1" height="1" fill="#d4d0c8"/><rect x="6" y="10" width="1" height="1" fill="#d4d0c8"/><rect x="7" y="10" width="1" height="1" fill="#d4d0c8"/><rect x="8" y="10" width="1" height="1" fill="#fff"/><rect x="9" y="10" width="1" height="1" fill="#fff"/><rect x="4" y="11" width="1" height="1" fill="#fff"/><rect x="5" y="11" width="1" height="1" fill="#fff"/><rect x="6" y="11" width="1" height="1" fill="#fff"/><rect x="7" y="11" width="1" height="1" fill="#fff"/><rect x="5" y="4" width="2" height="4" fill="#000"/><rect x="4" y="5" width="4" height="2" fill="#000"/></svg>
<div class="chk" style="left:1163px;top:159px;width:13px;height:13px;"></div>
<svg class="a" style="left:1163px;top:159px" width="13" height="13" shape-rendering="crispEdges"><rect x="9" y="3" width="1" height="1"/><rect x="8" y="4" width="1" height="1"/><rect x="9" y="4" width="1" height="1"/><rect x="3" y="5" width="1" height="1"/><rect x="7" y="5" width="1" height="1"/><rect x="8" y="5" width="1" height="1"/><rect x="9" y="5" width="1" height="1"/><rect x="3" y="6" width="1" height="1"/><rect x="4" y="6" width="1" height="1"/><rect x="6" y="6" width="1" height="1"/><rect x="7" y="6" width="1" height="1"/><rect x="8" y="6" width="1" height="1"/><rect x="3" y="7" width="1" height="1"/><rect x="4" y="7" width="1" height="1"/><rect x="5" y="7" width="1" height="1"/><rect x="6" y="7" width="1" height="1"/><rect x="7" y="7" width="1" height="1"/><rect x="4" y="8" width="1" height="1"/><rect x="5" y="8" width="1" height="1"/><rect x="6" y="8" width="1" height="1"/><rect x="5" y="9" width="1" height="1"/></svg>
<div class="chk" style="left:1163px;top:182px;width:13px;height:13px;"></div>
<svg class="a" style="left:1163px;top:182px" width="13" height="13" shape-rendering="crispEdges"><rect x="9" y="3" width="1" height="1"/><rect x="8" y="4" width="1" height="1"/><rect x="9" y="4" width="1" height="1"/><rect x="3" y="5" width="1" height="1"/><rect x="7" y="5" width="1" height="1"/><rect x="8" y="5" width="1" height="1"/><rect x="9" y="5" width="1" height="1"/><rect x="3" y="6" width="1" height="1"/><rect x="4" y="6" width="1" height="1"/><rect x="6" y="6" width="1" height="1"/><rect x="7" y="6" width="1" height="1"/><rect x="8" y="6" width="1" height="1"/><rect x="3" y="7" width="1" height="1"/><rect x="4" y="7" width="1" height="1"/><rect x="5" y="7" width="1" height="1"/><rect x="6" y="7" width="1" height="1"/><rect x="7" y="7" width="1" height="1"/><rect x="4" y="8" width="1" height="1"/><rect x="5" y="8" width="1" height="1"/><rect x="6" y="8" width="1" height="1"/><rect x="5" y="9" width="1" height="1"/></svg>
<div class="chk" style="left:1163px;top:205px;width:13px;height:13px;"></div>
<svg class="a" style="left:1163px;top:205px" width="13" height="13" shape-rendering="crispEdges"><rect x="9" y="3" width="1" height="1"/><rect x="8" y="4" width="1" height="1"/><rect x="9" y="4" width="1" height="1"/><rect x="3" y="5" width="1" height="1"/><rect x="7" y="5" width="1" height="1"/><rect x="8" y="5" width="1" height="1"/><rect x="9" y="5" width="1" height="1"/><rect x="3" y="6" width="1" height="1"/><rect x="4" y="6" width="1" height="1"/><rect x="6" y="6" width="1" height="1"/><rect x="7" y="6" width="1" height="1"/><rect x="8" y="6" width="1" height="1"/><rect x="3" y="7" width="1" height="1"/><rect x="4" y="7" width="1" height="1"/><rect x="5" y="7" width="1" height="1"/><rect x="6" y="7" width="1" height="1"/><rect x="7" y="7" width="1" height="1"/><rect x="4" y="8" width="1" height="1"/><rect x="5" y="8" width="1" height="1"/><rect x="6" y="8" width="1" height="1"/><rect x="5" y="9" width="1" height="1"/></svg>
<div class="chk" style="left:1163px;top:228px;width:13px;height:13px;"></div>
<svg class="a" style="left:1163px;top:228px" width="13" height="13" shape-rendering="crispEdges"><rect x="9" y="3" width="1" height="1"/><rect x="8" y="4" width="1" height="1"/><rect x="9" y="4" width="1" height="1"/><rect x="3" y="5" width="1" height="1"/><rect x="7" y="5" width="1" height="1"/><rect x="8" y="5" width="1" height="1"/><rect x="9" y="5" width="1" height="1"/><rect x="3" y="6" width="1" height="1"/><rect x="4" y="6" width="1" height="1"/><rect x="6" y="6" width="1" height="1"/><rect x="7" y="6" width="1" height="1"/><rect x="8" y="6" width="1" height="1"/><rect x="3" y="7" width="1" height="1"/><rect x="4" y="7" width="1" height="1"/><rect x="5" y="7" width="1" height="1"/><rect x="6" y="7" width="1" height="1"/><rect x="7" y="7" width="1" height="1"/><rect x="4" y="8" width="1" height="1"/><rect x="5" y="8" width="1" height="1"/><rect x="6" y="8" width="1" height="1"/><rect x="5" y="9" width="1" height="1"/></svg>
<div class="chk" style="left:1163px;top:251px;width:13px;height:13px;"></div>
<svg class="a" style="left:1163px;top:251px" width="13" height="13" shape-rendering="crispEdges"><rect x="9" y="3" width="1" height="1"/><rect x="8" y="4" width="1" height="1"/><rect x="9" y="4" width="1" height="1"/><rect x="3" y="5" width="1" height="1"/><rect x="7" y="5" width="1" height="1"/><rect x="8" y="5" width="1" height="1"/><rect x="9" y="5" width="1" height="1"/><rect x="3" y="6" width="1" height="1"/><rect x="4" y="6" width="1" height="1"/><rect x="6" y="6" width="1" height="1"/><rect x="7" y="6" width="1" height="1"/><rect x="8" y="6" width="1" height="1"/><rect x="3" y="7" width="1" height="1"/><rect x="4" y="7" width="1" height="1"/><rect x="5" y="7" width="1" height="1"/><rect x="6" y="7" width="1" height="1"/><rect x="7" y="7" width="1" height="1"/><rect x="4" y="8" width="1" height="1"/><rect x="5" y="8" width="1" height="1"/><rect x="6" y="8" width="1" height="1"/><rect x="5" y="9" width="1" height="1"/></svg>
<div class="btn" style="left:209px;top:393px;width:25px;height:25px;"></div>
<div class="btn" style="left:209px;top:423px;width:25px;height:25px;"></div>
<div class="btn" style="left:209px;top:649px;width:25px;height:25px;"></div>
<div class="btn" style="left:209px;top:679px;width:25px;height:25px;"></div>
<div class="btn" style="left:209px;top:709px;width:25px;height:25px;"></div>
<div class="btn" style="left:209px;top:739px;width:25px;height:25px;"></div>
<div class="btn" style="left:209px;top:965px;width:25px;height:25px;"></div>
<div class="btn" style="left:209px;top:995px;width:25px;height:25px;"></div>
<svg class="plots" width="1280" height="1024" viewBox="0 0 1280 1024"><defs><clipPath id="cb"><rect x="239" y="709" width="1037" height="311"/></clipPath></defs><rect x="289" y="106" width="866" height="1" fill="#d4d4d4"/><rect x="289" y="135" width="866" height="1" fill="#d4d4d4"/><rect x="289" y="163" width="866" height="1" fill="#d4d4d4"/><rect x="289" y="192" width="866" height="1" fill="#d4d4d4"/><rect x="289" y="220" width="866" height="1" fill="#d4d4d4"/><rect x="289" y="249" width="866" height="1" fill="#d4d4d4"/><rect x="289" y="277" width="866" height="1" fill="#d4d4d4"/><rect x="289" y="305" width="866" height="1" fill="#d4d4d4"/><rect x="289" y="334" width="866" height="1" fill="#d4d4d4"/><rect x="289" y="362" width="866" height="1" fill="#d4d4d4"/><rect x="462" y="78" width="1" height="285" fill="#d4d4d4"/><rect x="635" y="78" width="1" height="285" fill="#d4d4d4"/><rect x="808" y="78" width="1" height="285" fill="#d4d4d4"/><rect x="981" y="78" width="1" height="285" fill="#d4d4d4"/><rect x="288" y="78" width="1" height="285" fill="#000"/><rect x="289" y="363" width="866" height="1" fill="#000"/><rect x="284" y="106" width="4" height="1" fill="#000"/><rect x="284" y="135" width="4" height="1" fill="#000"/><rect x="284" y="163" width="4" height="1" fill="#000"/><rect x="284" y="192" width="4" height="1" fill="#000"/><rect x="284" y="220" width="4" height="1" fill="#000"/><rect x="284" y="249" width="4" height="1" fill="#000"/><rect x="284" y="277" width="4" height="1" fill="#000"/><rect x="284" y="305" width="4" height="1" fill="#000"/><rect x="284" y="334" width="4" height="1" fill="#000"/><rect x="284" y="362" width="4" height="1" fill="#000"/><rect x="284" y="78" width="4" height="1" fill="#000"/><rect x="289" y="364" width="1" height="4" fill="#000"/><rect x="462" y="364" width="1" height="4" fill="#000"/><rect x="635" y="364" width="1" height="4" fill="#000"/><rect x="808" y="364" width="1" height="4" fill="#000"/><rect x="981" y="364" width="1" height="4" fill="#000"/><path d="M288.40 196.30 C289.00 193.95 290.73 186.38 292.00 182.20 C293.27 178.02 294.57 174.77 296.00 171.25 C297.43 167.73 298.53 164.61 300.60 161.10 C302.67 157.59 306.32 153.98 308.40 150.20 C310.48 146.42 311.53 142.97 313.10 138.40 C314.67 133.83 316.23 128.13 317.80 122.80 C319.37 117.47 320.93 109.99 322.50 106.40 C324.07 102.81 325.63 101.63 327.20 101.25 C328.77 100.87 330.33 102.32 331.90 104.10 C333.47 105.88 335.04 108.78 336.60 111.90 C338.16 115.02 339.82 118.63 341.25 122.80 C342.68 126.97 343.91 131.17 345.20 136.90 C346.49 142.63 347.83 150.43 349.00 157.20 C350.17 163.97 351.02 171.25 352.20 177.50 C353.38 183.75 354.28 190.53 356.10 194.70 C357.92 198.87 360.88 200.28 363.10 202.50 C365.32 204.72 367.18 206.70 369.40 208.00 C371.62 209.30 373.80 210.30 376.40 210.30 C379.00 210.30 382.27 208.65 385.00 208.00 C387.73 207.35 389.93 206.23 392.80 206.40 C395.67 206.57 399.33 208.35 402.20 209.00 C405.07 209.65 407.40 210.47 410.00 210.30 C412.60 210.13 414.93 208.65 417.80 208.00 C420.67 207.35 424.33 206.53 427.20 206.40 C430.07 206.27 432.40 207.07 435.00 207.20 C437.60 207.33 440.45 207.73 442.80 207.20 C445.15 206.67 447.40 205.57 449.10 204.00 C450.80 202.43 451.70 201.18 453.00 197.80 C454.30 194.43 455.35 189.22 456.90 183.75 C458.45 178.28 460.74 169.17 462.30 165.00 C463.86 160.83 464.55 161.10 466.25 158.75 C467.95 156.40 470.42 154.54 472.50 150.90 C474.58 147.26 477.08 141.58 478.75 136.90 C480.42 132.22 481.09 127.49 482.50 122.80 C483.91 118.11 485.58 112.00 487.20 108.75 C488.82 105.50 490.38 103.56 492.20 103.30 C494.02 103.04 496.07 104.21 498.10 107.20 C500.13 110.19 502.57 116.30 504.40 121.25 C506.23 126.20 507.54 130.39 509.10 136.90 C510.66 143.41 512.32 151.45 513.75 160.30 C515.18 169.15 516.39 183.75 517.70 190.00 C519.01 196.25 519.65 195.33 521.60 197.80 C523.55 200.27 526.54 202.72 529.40 204.80 C532.26 206.88 536.15 209.52 538.75 210.30 C541.35 211.08 542.14 210.15 545.00 209.50 C547.86 208.85 552.52 206.58 555.90 206.40 C559.28 206.22 562.17 207.75 565.30 208.40 C568.43 209.05 570.79 210.63 574.70 210.30 C578.61 209.97 584.33 207.05 588.75 206.40 C593.17 205.75 597.76 206.53 601.25 206.40 C604.74 206.27 607.38 207.03 609.70 205.60 C612.03 204.17 613.63 200.92 615.20 197.80 C616.77 194.68 617.42 192.37 619.10 186.90 C620.78 181.43 623.48 169.95 625.30 165.00 C627.12 160.05 628.17 159.93 630.00 157.20 C631.83 154.47 634.30 152.25 636.25 148.60 C638.20 144.95 639.88 140.12 641.70 135.30 C643.53 130.48 645.50 124.00 647.20 119.70 C648.90 115.40 650.55 111.77 651.90 109.50 C653.25 107.23 654.00 106.22 655.30 106.10 C656.60 105.97 657.93 106.22 659.70 108.75 C661.47 111.28 664.08 116.56 665.90 121.25 C667.72 125.94 669.03 130.39 670.60 136.90 C672.17 143.41 673.73 151.97 675.30 160.30 C676.87 168.63 678.70 180.78 680.00 186.90 C681.30 193.02 681.53 194.40 683.10 197.00 C684.67 199.60 686.27 200.28 689.40 202.50 C692.53 204.72 698.78 209.13 701.90 210.30 C705.02 211.47 705.23 210.15 708.10 209.50 C710.97 208.85 715.97 206.73 719.10 206.40 C722.23 206.07 723.78 206.85 726.90 207.50 C730.02 208.15 733.63 210.48 737.80 210.30 C741.97 210.12 746.68 207.05 751.90 206.40 C757.12 205.75 765.20 207.30 769.10 206.40 C773.00 205.50 773.75 203.47 775.30 201.00 C776.85 198.53 776.57 197.60 778.40 191.60 C780.23 185.60 784.05 171.00 786.25 165.00 C788.45 159.00 789.68 158.60 791.60 155.60 C793.52 152.60 795.85 150.38 797.80 147.00 C799.75 143.62 801.47 139.85 803.30 135.30 C805.12 130.75 807.07 123.60 808.75 119.70 C810.43 115.80 811.71 113.47 813.40 111.90 C815.09 110.33 817.07 109.27 818.90 110.30 C820.73 111.33 822.70 114.45 824.40 118.10 C826.10 121.75 827.54 126.22 829.10 132.20 C830.66 138.18 832.20 145.93 833.75 154.00 C835.30 162.07 836.84 173.56 838.40 180.60 C839.96 187.64 841.27 192.60 843.10 196.25 C844.93 199.90 846.02 200.29 849.40 202.50 C852.78 204.71 858.20 208.85 863.40 209.50 C868.60 210.15 875.38 206.40 880.60 206.40 C885.82 206.40 891.05 208.98 894.70 209.50 C898.35 210.02 899.12 210.02 902.50 209.50 C905.88 208.98 910.32 207.05 915.00 206.40 C919.68 205.75 927.22 206.77 930.60 205.60 C933.98 204.43 933.73 203.04 935.30 199.40 C936.87 195.76 938.17 189.48 940.00 183.75 C941.83 178.02 944.17 170.21 946.25 165.00 C948.33 159.79 950.42 156.40 952.50 152.50 C954.58 148.60 956.30 146.67 958.75 141.60 C961.20 136.53 964.41 126.97 967.20 122.10 C969.99 117.23 973.05 113.32 975.50 112.40 C977.95 111.48 979.77 113.00 981.90 116.60 C984.03 120.20 986.47 127.12 988.30 134.00 C990.13 140.88 991.37 149.63 992.90 157.90 C994.43 166.17 995.97 177.02 997.50 183.60 C999.03 190.18 1000.11 194.03 1002.10 197.40 C1004.09 200.77 1006.38 201.82 1009.45 203.80 C1012.52 205.78 1015.61 208.93 1020.50 209.30 C1025.39 209.67 1032.99 206.00 1038.80 206.00 C1044.61 206.00 1049.23 209.42 1055.35 209.30 C1061.47 209.18 1069.99 206.07 1075.50 205.30 C1081.01 204.53 1085.33 206.17 1088.40 204.70 C1091.47 203.23 1092.22 200.62 1093.90 196.50 C1095.58 192.38 1096.97 185.20 1098.50 180.00 C1100.03 174.80 1101.42 169.75 1103.10 165.30 C1104.78 160.85 1106.15 157.90 1108.60 153.30 C1111.05 148.70 1115.05 142.90 1117.80 137.70 C1120.55 132.50 1122.66 126.13 1125.10 122.10 C1127.54 118.07 1130.15 114.42 1132.45 113.50 C1134.75 112.58 1136.91 113.48 1138.90 116.60 C1140.89 119.72 1142.57 125.00 1144.40 132.20 C1146.23 139.40 1148.22 150.62 1149.90 159.80 C1151.58 168.98 1153.73 182.72 1154.50 187.30" fill="none" stroke="#000" stroke-width="1.1"/><rect x="310" y="393" width="1" height="286" fill="#d4d4d4"/><rect x="339" y="393" width="1" height="286" fill="#d4d4d4"/><rect x="367" y="393" width="1" height="286" fill="#d4d4d4"/><rect x="395" y="393" width="1" height="286" fill="#d4d4d4"/><rect x="424" y="393" width="1" height="286" fill="#d4d4d4"/><rect x="452" y="393" width="1" height="286" fill="#d4d4d4"/><rect x="480" y="393" width="1" height="286" fill="#d4d4d4"/><rect x="509" y="393" width="1" height="286" fill="#d4d4d4"/><rect x="537" y="393" width="1" height="286" fill="#d4d4d4"/><rect x="565" y="393" width="1" height="286" fill="#d4d4d4"/><rect x="593" y="393" width="1" height="286" fill="#d4d4d4"/><rect x="622" y="393" width="1" height="286" fill="#d4d4d4"/><rect x="650" y="393" width="1" height="286" fill="#d4d4d4"/><rect x="678" y="393" width="1" height="286" fill="#d4d4d4"/><rect x="707" y="393" width="1" height="286" fill="#d4d4d4"/><rect x="735" y="393" width="1" height="286" fill="#d4d4d4"/><rect x="763" y="393" width="1" height="286" fill="#d4d4d4"/><rect x="792" y="393" width="1" height="286" fill="#d4d4d4"/><rect x="820" y="393" width="1" height="286" fill="#d4d4d4"/><rect x="848" y="393" width="1" height="286" fill="#d4d4d4"/><rect x="877" y="393" width="1" height="286" fill="#d4d4d4"/><rect x="905" y="393" width="1" height="286" fill="#d4d4d4"/><rect x="933" y="393" width="1" height="286" fill="#d4d4d4"/><rect x="961" y="393" width="1" height="286" fill="#d4d4d4"/><rect x="990" y="393" width="1" height="286" fill="#d4d4d4"/><rect x="1018" y="393" width="1" height="286" fill="#d4d4d4"/><rect x="1046" y="393" width="1" height="286" fill="#d4d4d4"/><rect x="1075" y="393" width="1" height="286" fill="#d4d4d4"/><rect x="1103" y="393" width="1" height="286" fill="#d4d4d4"/><rect x="1131" y="393" width="1" height="286" fill="#d4d4d4"/><rect x="1160" y="393" width="1" height="286" fill="#d4d4d4"/><rect x="1188" y="393" width="1" height="286" fill="#d4d4d4"/><rect x="1216" y="393" width="1" height="286" fill="#d4d4d4"/><rect x="1244" y="393" width="1" height="286" fill="#d4d4d4"/><rect x="1273" y="393" width="1" height="286" fill="#d4d4d4"/><rect x="294" y="421" width="982" height="1" fill="#d4d4d4"/><rect x="294" y="450" width="982" height="1" fill="#d4d4d4"/><rect x="294" y="478" width="982" height="1" fill="#d4d4d4"/><rect x="294" y="507" width="982" height="1" fill="#d4d4d4"/><rect x="294" y="535" width="982" height="1" fill="#d4d4d4"/><rect x="294" y="564" width="982" height="1" fill="#d4d4d4"/><rect x="294" y="593" width="982" height="1" fill="#d4d4d4"/><rect x="294" y="621" width="982" height="1" fill="#d4d4d4"/><rect x="294" y="650" width="982" height="1" fill="#d4d4d4"/><rect x="294" y="678" width="982" height="1" fill="#d4d4d4"/><rect x="293" y="393" width="1" height="286" fill="#000"/><rect x="294" y="679" width="982" height="1" fill="#000"/><rect x="289" y="421" width="4" height="1" fill="#000"/><rect x="289" y="450" width="4" height="1" fill="#000"/><rect x="289" y="478" width="4" height="1" fill="#000"/><rect x="289" y="507" width="4" height="1" fill="#000"/><rect x="289" y="535" width="4" height="1" fill="#000"/><rect x="289" y="564" width="4" height="1" fill="#000"/><rect x="289" y="593" width="4" height="1" fill="#000"/><rect x="289" y="621" width="4" height="1" fill="#000"/><rect x="289" y="650" width="4" height="1" fill="#000"/><rect x="289" y="678" width="4" height="1" fill="#000"/><rect x="289" y="393" width="4" height="1" fill="#000"/><rect x="310" y="680" width="1" height="4" fill="#000"/><rect x="339" y="680" width="1" height="4" fill="#000"/><rect x="367" y="680" width="1" height="4" fill="#000"/><rect x="395" y="680" width="1" height="4" fill="#000"/><rect x="424" y="680" width="1" height="4" fill="#000"/><rect x="452" y="680" width="1" height="4" fill="#000"/><rect x="480" y="680" width="1" height="4" fill="#000"/><rect x="509" y="680" width="1" height="4" fill="#000"/><rect x="537" y="680" width="1" height="4" fill="#000"/><rect x="565" y="680" width="1" height="4" fill="#000"/><rect x="593" y="680" width="1" height="4" fill="#000"/><rect x="622" y="680" width="1" height="4" fill="#000"/><rect x="650" y="680" width="1" height="4" fill="#000"/><rect x="678" y="680" width="1" height="4" fill="#000"/><rect x="707" y="680" width="1" height="4" fill="#000"/><rect x="735" y="680" width="1" height="4" fill="#000"/><rect x="763" y="680" width="1" height="4" fill="#000"/><rect x="792" y="680" width="1" height="4" fill="#000"/><rect x="820" y="680" width="1" height="4" fill="#000"/><rect x="848" y="680" width="1" height="4" fill="#000"/><rect x="877" y="680" width="1" height="4" fill="#000"/><rect x="905" y="680" width="1" height="4" fill="#000"/><rect x="933" y="680" width="1" height="4" fill="#000"/><rect x="961" y="680" width="1" height="4" fill="#000"/><rect x="990" y="680" width="1" height="4" fill="#000"/><rect x="1018" y="680" width="1" height="4" fill="#000"/><rect x="1046" y="680" width="1" height="4" fill="#000"/><rect x="1075" y="680" width="1" height="4" fill="#000"/><rect x="1103" y="680" width="1" height="4" fill="#000"/><rect x="1131" y="680" width="1" height="4" fill="#000"/><rect x="1160" y="680" width="1" height="4" fill="#000"/><rect x="1188" y="680" width="1" height="4" fill="#000"/><rect x="1216" y="680" width="1" height="4" fill="#000"/><rect x="1244" y="680" width="1" height="4" fill="#000"/><rect x="1273" y="680" width="1" height="4" fill="#000"/><rect x="310" y="709" width="1" height="286" fill="#d4d4d4"/><rect x="339" y="709" width="1" height="286" fill="#d4d4d4"/><rect x="367" y="709" width="1" height="286" fill="#d4d4d4"/><rect x="395" y="709" width="1" height="286" fill="#d4d4d4"/><rect x="424" y="709" width="1" height="286" fill="#d4d4d4"/><rect x="452" y="709" width="1" height="286" fill="#d4d4d4"/><rect x="480" y="709" width="1" height="286" fill="#d4d4d4"/><rect x="509" y="709" width="1" height="286" fill="#d4d4d4"/><rect x="537" y="709" width="1" height="286" fill="#d4d4d4"/><rect x="565" y="709" width="1" height="286" fill="#d4d4d4"/><rect x="593" y="709" width="1" height="286" fill="#d4d4d4"/><rect x="622" y="709" width="1" height="286" fill="#d4d4d4"/><rect x="650" y="709" width="1" height="286" fill="#d4d4d4"/><rect x="678" y="709" width="1" height="286" fill="#d4d4d4"/><rect x="707" y="709" width="1" height="286" fill="#d4d4d4"/><rect x="735" y="709" width="1" height="286" fill="#d4d4d4"/><rect x="763" y="709" width="1" height="286" fill="#d4d4d4"/><rect x="792" y="709" width="1" height="286" fill="#d4d4d4"/><rect x="820" y="709" width="1" height="286" fill="#d4d4d4"/><rect x="848" y="709" width="1" height="286" fill="#d4d4d4"/><rect x="877" y="709" width="1" height="286" fill="#d4d4d4"/><rect x="905" y="709" width="1" height="286" fill="#d4d4d4"/><rect x="933" y="709" width="1" height="286" fill="#d4d4d4"/><rect x="961" y="709" width="1" height="286" fill="#d4d4d4"/><rect x="990" y="709" width="1" height="286" fill="#d4d4d4"/><rect x="1018" y="709" width="1" height="286" fill="#d4d4d4"/><rect x="1046" y="709" width="1" height="286" fill="#d4d4d4"/><rect x="1075" y="709" width="1" height="286" fill="#d4d4d4"/><rect x="1103" y="709" width="1" height="286" fill="#d4d4d4"/><rect x="1131" y="709" width="1" height="286" fill="#d4d4d4"/><rect x="1160" y="709" width="1" height="286" fill="#d4d4d4"/><rect x="1188" y="709" width="1" height="286" fill="#d4d4d4"/><rect x="1216" y="709" width="1" height="286" fill="#d4d4d4"/><rect x="1244" y="709" width="1" height="286" fill="#d4d4d4"/><rect x="1273" y="709" width="1" height="286" fill="#d4d4d4"/><rect x="294" y="751" width="982" height="1" fill="#d4d4d4"/><rect x="294" y="788" width="982" height="1" fill="#d4d4d4"/><rect x="294" y="824" width="982" height="1" fill="#d4d4d4"/><rect x="294" y="861" width="982" height="1" fill="#d4d4d4"/><rect x="294" y="934" width="982" height="1" fill="#d4d4d4"/><rect x="294" y="971" width="982" height="1" fill="#d4d4d4"/><rect x="294" y="714" width="982" height="1" fill="#d4d4d4"/><rect x="293" y="709" width="1" height="286" fill="#000"/><rect x="294" y="995" width="982" height="1" fill="#000"/><rect x="289" y="751" width="4" height="1" fill="#000"/><rect x="289" y="788" width="4" height="1" fill="#000"/><rect x="289" y="824" width="4" height="1" fill="#000"/><rect x="289" y="861" width="4" height="1" fill="#000"/><rect x="289" y="934" width="4" height="1" fill="#000"/><rect x="289" y="971" width="4" height="1" fill="#000"/><rect x="289" y="714" width="4" height="1" fill="#000"/><rect x="289" y="714" width="4" height="1" fill="#000"/><rect x="310" y="996" width="1" height="4" fill="#000"/><rect x="339" y="996" width="1" height="4" fill="#000"/><rect x="367" y="996" width="1" height="4" fill="#000"/><rect x="395" y="996" width="1" height="4" fill="#000"/><rect x="424" y="996" width="1" height="4" fill="#000"/><rect x="452" y="996" width="1" height="4" fill="#000"/><rect x="480" y="996" width="1" height="4" fill="#000"/><rect x="509" y="996" width="1" height="4" fill="#000"/><rect x="537" y="996" width="1" height="4" fill="#000"/><rect x="565" y="996" width="1" height="4" fill="#000"/><rect x="593" y="996" width="1" height="4" fill="#000"/><rect x="622" y="996" width="1" height="4" fill="#000"/><rect x="650" y="996" width="1" height="4" fill="#000"/><rect x="678" y="996" width="1" height="4" fill="#000"/><rect x="707" y="996" width="1" height="4" fill="#000"/><rect x="735" y="996" width="1" height="4" fill="#000"/><rect x="763" y="996" width="1" height="4" fill="#000"/><rect x="792" y="996" width="1" height="4" fill="#000"/><rect x="820" y="996" width="1" height="4" fill="#000"/><rect x="848" y="996" width="1" height="4" fill="#000"/><rect x="877" y="996" width="1" height="4" fill="#000"/><rect x="905" y="996" width="1" height="4" fill="#000"/><rect x="933" y="996" width="1" height="4" fill="#000"/><rect x="961" y="996" width="1" height="4" fill="#000"/><rect x="990" y="996" width="1" height="4" fill="#000"/><rect x="1018" y="996" width="1" height="4" fill="#000"/><rect x="1046" y="996" width="1" height="4" fill="#000"/><rect x="1075" y="996" width="1" height="4" fill="#000"/><rect x="1103" y="996" width="1" height="4" fill="#000"/><rect x="1131" y="996" width="1" height="4" fill="#000"/><rect x="1160" y="996" width="1" height="4" fill="#000"/><rect x="1188" y="996" width="1" height="4" fill="#000"/><rect x="1216" y="996" width="1" height="4" fill="#000"/><rect x="1244" y="996" width="1" height="4" fill="#000"/><rect x="1273" y="996" width="1" height="4" fill="#000"/><rect x="289" y="751" width="4" height="1" fill="#000"/><rect x="289" y="788" width="4" height="1" fill="#000"/><rect x="289" y="824" width="4" height="1" fill="#000"/><rect x="289" y="861" width="4" height="1" fill="#000"/><rect x="289" y="898" width="4" height="1" fill="#000"/><rect x="289" y="934" width="4" height="1" fill="#000"/><rect x="289" y="971" width="4" height="1" fill="#000"/><path d="M294 488.5 H718.5 V503.5 H737.5 V504.5 H760.5 V505.5 H823.5 V504.5 H836.5 V503.5 H849.5 V501.5 H862.5 V500.5 H874.5 V499.5 H887.5 V498.5 H900.5 V497.5 H912.5 V495.5 H925.5 V493.5 H938.5 V492.5 H953.5 V490.5 H967.5 V488.5 H981.5 V487.5 H994.5 V486.5 H1007.5 V485.5 H1031.5 V484.5 H1064.5 V483.5 H1093.5 V482.5 H1128.5 V481.5 H1183" fill="none" stroke="#000" stroke-width="1.4"/><rect x="706" y="535" width="81" height="1" fill="#c02020"/><rect x="953" y="535" width="323" height="1" fill="#c02020"/><line x1="741.5" y1="393" x2="741.5" y2="679" stroke="#000" stroke-dasharray="3 2" shape-rendering="crispEdges"/><g clip-path="url(#cb)"><rect x="970.5" y="898.5" width="17" height="5" fill="#30e848" stroke="#000"/><rect x="987.5" y="898.5" width="17" height="18" fill="#00ff00" stroke="#000"/><rect x="1004.5" y="898.5" width="17" height="43" fill="#00ff00" stroke="#000"/><rect x="1021.5" y="898.5" width="17" height="77" fill="#00ff00" stroke="#000"/><rect x="1038.5" y="898.5" width="17" height="59" fill="#00ff00" stroke="#000"/><rect x="1055.5" y="898.5" width="17" height="55" fill="#00ff00" stroke="#000"/><rect x="1072.5" y="898.5" width="17" height="55" fill="#00ff00" stroke="#000"/><rect x="1089.5" y="898.5" width="17" height="50" fill="#00ff00" stroke="#000"/><rect x="1106.5" y="898.5" width="17" height="46" fill="#00ff00" stroke="#000"/><rect x="1123.5" y="898.5" width="17" height="44" fill="#00ff00" stroke="#000"/><rect x="1140.5" y="898.5" width="17" height="44" fill="#00ff00" stroke="#000"/><rect x="1157.5" y="898.5" width="17" height="34" fill="#00ff00" stroke="#000"/><rect x="1174.5" y="898.5" width="17" height="14" fill="#00ff00" stroke="#000"/><rect x="1191.5" y="898.5" width="17" height="26" fill="#00ff00" stroke="#000"/><rect x="1208.5" y="898.5" width="17" height="32" fill="#00ff00" stroke="#000"/><rect x="1225.5" y="898.5" width="17" height="24" fill="#00ff00" stroke="#000"/><rect x="1242.5" y="898.5" width="17" height="32" fill="#00ff00" stroke="#000"/><rect x="1259.5" y="898.5" width="16.5" height="14" fill="#00ff00" stroke="#000"/><rect x="294.5" y="852.5" width="424" height="46" fill="rgb(168,255,0)" stroke="#000"/><rect x="718.5" y="897.5" width="14" height="1" fill="rgb(114,255,0)" stroke="#000"/><rect x="732.5" y="896.5" width="3" height="2" fill="rgb(114,255,0)" stroke="#000"/><rect x="735.5" y="886.5" width="13" height="12" fill="rgb(111,255,0)" stroke="#000"/><rect x="748.5" y="888.5" width="12" height="10" fill="rgb(111,255,0)" stroke="#000"/><rect x="760.5" y="890.5" width="13" height="8" fill="rgb(107,255,0)" stroke="#000"/><rect x="773.5" y="892.5" width="13" height="6" fill="rgb(107,255,0)" stroke="#000"/><rect x="786.5" y="892.5" width="12" height="6" fill="rgb(107,255,0)" stroke="#000"/><rect x="798.5" y="860.5" width="13" height="38" fill="rgb(107,255,0)" stroke="#000"/><rect x="811.5" y="813.5" width="13" height="85" fill="rgb(107,255,0)" stroke="#000"/><rect x="824.5" y="820.5" width="12" height="78" fill="rgb(111,255,0)" stroke="#000"/><rect x="836.5" y="838.5" width="13" height="60" fill="rgb(114,255,0)" stroke="#000"/><rect x="849.5" y="847.5" width="13" height="51" fill="rgb(121,255,0)" stroke="#000"/><rect x="862.5" y="847.5" width="12" height="51" fill="rgb(125,255,0)" stroke="#000"/><rect x="874.5" y="838.5" width="13" height="60" fill="rgb(129,255,0)" stroke="#000"/><rect x="887.5" y="835.5" width="13" height="63" fill="rgb(132,255,0)" stroke="#000"/><rect x="900.5" y="832.5" width="12" height="66" fill="rgb(136,255,0)" stroke="#000"/><rect x="912.5" y="826.5" width="13" height="72" fill="rgb(143,255,0)" stroke="#000"/><rect x="925.5" y="814.5" width="13" height="84" fill="rgb(150,255,0)" stroke="#000"/><rect x="938.5" y="827.5" width="15" height="71" fill="rgb(153,255,0)" stroke="#000"/><rect x="953.5" y="826.5" width="14" height="72" fill="rgb(161,255,0)" stroke="#000"/><rect x="967.5" y="841.5" width="14" height="57" fill="rgb(168,255,0)" stroke="#000"/><rect x="981.5" y="853.5" width="13" height="45" fill="rgb(171,255,0)" stroke="#000"/><rect x="994.5" y="866.5" width="13" height="32" fill="rgb(175,255,0)" stroke="#000"/><rect x="1007.5" y="875.5" width="12" height="23" fill="rgb(178,255,0)" stroke="#000"/><rect x="1019.5" y="875.5" width="12" height="23" fill="rgb(178,255,0)" stroke="#000"/><rect x="1031.5" y="874.5" width="11" height="24" fill="rgb(182,255,0)" stroke="#000"/><rect x="1042.5" y="871.5" width="11" height="27" fill="rgb(182,255,0)" stroke="#000"/><rect x="1053.5" y="869.5" width="11" height="29" fill="rgb(182,255,0)" stroke="#000"/><rect x="1064.5" y="866.5" width="10" height="32" fill="rgb(186,255,0)" stroke="#000"/><rect x="1074.5" y="863.5" width="10" height="35" fill="rgb(186,255,0)" stroke="#000"/><rect x="1084.5" y="863.5" width="9" height="35" fill="rgb(186,255,0)" stroke="#000"/><rect x="1093.5" y="867.5" width="9" height="31" fill="rgb(189,255,0)" stroke="#000"/><rect x="1102.5" y="869.5" width="9" height="29" fill="rgb(189,255,0)" stroke="#000"/><rect x="1111.5" y="870.5" width="9" height="28" fill="rgb(189,255,0)" stroke="#000"/><rect x="1120.5" y="871.5" width="8" height="27" fill="rgb(189,255,0)" stroke="#000"/><rect x="1128.5" y="873.5" width="8" height="25" fill="rgb(193,255,0)" stroke="#000"/><rect x="1136.5" y="875.5" width="8" height="23" fill="rgb(193,255,0)" stroke="#000"/><rect x="1144.5" y="873.5" width="8" height="25" fill="rgb(193,255,0)" stroke="#000"/><rect x="1152.5" y="870.5" width="8" height="28" fill="rgb(193,255,0)" stroke="#000"/><rect x="1160.5" y="865.5" width="8" height="33" fill="rgb(193,255,0)" stroke="#000"/><rect x="1168.5" y="860.5" width="8" height="38" fill="rgb(193,255,0)" stroke="#000"/><rect x="1176.5" y="859.5" width="7" height="39" fill="rgb(193,255,0)" stroke="#000"/></g><line x1="741.5" y1="709" x2="741.5" y2="995" stroke="#000" stroke-dasharray="3 2" shape-rendering="crispEdges"/><rect x="294" y="898" width="982" height="1" fill="#000"/><rect x="778" y="883" width="4" height="4" fill="#20e040"/><circle cx="1106.3" cy="965.6" r="15.8" fill="#00f000" stroke="#000" stroke-width="1"/><circle cx="1123" cy="961.6" r="15.8" fill="#00f000" stroke="#000" stroke-width="1"/><circle cx="1157" cy="959.5" r="15.8" fill="#00f000" stroke="#000" stroke-width="1"/><circle cx="1174.5" cy="949.4" r="15.8" fill="#00f000" stroke="#000" stroke-width="1"/><path d="M1163.5 899 L1170.5 905.5 L1156.5 905.5 Z" fill="#f8f090" stroke="#000" stroke-width="1"/></svg>
<div id="tx"><div class="t" style="top:3px;left:20px;font-weight:bold;font-size:12px;color:#fff;">Vocal Tract Lab</div>
<div class="t" style="top:26px;left:15px;font-size:12px;"><span style="display:inline-block;transform:scaleX(0.91);transform-origin:0 0">File</span></div>
<div class="t" style="top:26px;left:50px;font-size:12px;"><span style="display:inline-block;transform:scaleX(0.91);transform-origin:0 0">Export</span></div>
<div class="t" style="top:26px;left:101px;font-size:12px;"><span style="display:inline-block;transform:scaleX(0.91);transform-origin:0 0">Spectrum</span></div>
<div class="t" style="top:26px;left:166px;font-size:12px;"><span style="display:inline-block;transform:scaleX(0.91);transform-origin:0 0">Articulatory model</span></div>
<div class="t" style="top:52px;left:3.0px;width:71px;text-align:center;font-size:12px;"><span style="display:inline-block;transform:scaleX(0.91);transform-origin:50% 0">Signal view</span></div>
<div class="t" style="top:52px;left:80.0px;width:93px;text-align:center;font-size:12px;"><span style="display:inline-block;transform:scaleX(0.91);transform-origin:50% 0">Vocal tract view</span></div>
<div class="t" style="top:52px;left:179.0px;width:126px;text-align:center;font-size:12px;"><span style="display:inline-block;transform:scaleX(0.91);transform-origin:50% 0">Time domain simulation</span></div>
<div class="t" style="top:52px;left:311.0px;width:93px;text-align:center;font-size:12px;"><span style="display:inline-block;transform:scaleX(0.91);transform-origin:50% 0">Adaptation view</span></div>
<div class="t" style="top:52px;left:410.0px;width:120px;text-align:center;font-size:12px;"><span style="display:inline-block;transform:scaleX(0.91);transform-origin:50% 0">Gestural score</span></div>
<div class="t" style="top:84px;left:7px;font-size:12px;"><span style="display:inline-block;transform:scaleX(0.91);transform-origin:0 0">Speed:</span></div>
<div class="t" style="top:84px;left:54px;font-size:12px;"><span style="display:inline-block;transform:scaleX(0.91);transform-origin:0 0">50</span></div>
<div class="t" style="top:84px;left:97px;font-size:12px;"><span style="display:inline-block;transform:scaleX(0.91);transform-origin:0 0">Pos.:</span></div>
<div class="t" style="top:84px;left:133px;font-size:12px;"><span style="display:inline-block;transform:scaleX(0.91);transform-origin:0 0">6700</span></div>
<div class="t" style="top:134px;left:27px;font-size:12px;"><span style="display:inline-block;transform:scaleX(0.91);transform-origin:0 0">Show animation</span></div>
<div class="t" style="top:170px;left:9.0px;width:175px;text-align:center;font-size:12px;"><span style="display:inline-block;transform:scaleX(0.91);transform-origin:50% 0">Reset</span></div>
<div class="t" style="top:199px;left:9.0px;width:175px;text-align:center;font-size:12px;"><span style="display:inline-block;transform:scaleX(0.91);transform-origin:50% 0">Continue synthesis</span></div>
<div class="t" style="top:224px;left:19px;font-size:12px;"><span style="display:inline-block;transform:scaleX(0.91);transform-origin:0 0">Kind of synthesis</span></div>
<div class="t" style="top:244px;left:33px;font-size:12px;"><span style="display:inline-block;transform:scaleX(0.91);transform-origin:0 0">Subglottal impedance</span></div>
<div class="t" style="top:267px;left:33px;font-size:12px;"><span style="display:inline-block;transform:scaleX(0.91);transform-origin:0 0">Supraglottal impedance</span></div>
<div class="t" style="top:290px;left:33px;font-size:12px;"><span style="display:inline-block;transform:scaleX(0.91);transform-origin:0 0">Transfer function</span></div>
<div class="t" style="top:313px;left:33px;font-size:12px;"><span style="display:inline-block;transform:scaleX(0.91);transform-origin:0 0">Vowel (LF-excitation)</span></div>
<div class="t" style="top:336px;left:33px;font-size:12px;"><span style="display:inline-block;transform:scaleX(0.91);transform-origin:0 0">Vowel (Entire system)</span></div>
<div class="t" style="top:359px;left:33px;font-size:12px;"><span style="display:inline-block;transform:scaleX(0.91);transform-origin:0 0">Voiceless fricative</span></div>
<div class="t" style="top:382px;left:33px;font-size:12px;"><span style="display:inline-block;transform:scaleX(0.91);transform-origin:0 0">Gestural model</span></div>
<div class="t" style="top:417px;left:9.0px;width:175px;text-align:center;font-size:12px;"><span style="display:inline-block;transform:scaleX(0.91);transform-origin:50% 0">Proceed 1 ms</span></div>
<div class="t" style="top:446px;left:9.0px;width:175px;text-align:center;font-size:12px;"><span style="display:inline-block;transform:scaleX(0.91);transform-origin:50% 0">Set area function</span></div>
<div class="t" style="top:475px;left:9.0px;width:175px;text-align:center;font-size:12px;"><span style="display:inline-block;transform:scaleX(0.91);transform-origin:50% 0">Glottis dialog</span></div>
<div class="t" style="top:504px;left:9.0px;width:175px;text-align:center;font-size:12px;"><span style="display:inline-block;transform:scaleX(0.91);transform-origin:50% 0">LF excitation waveform</span></div>
<div class="t" style="top:581px;left:9.0px;width:174px;text-align:center;font-size:12px;"><span style="display:inline-block;transform:scaleX(0.91);transform-origin:50% 0">Play all</span></div>
<div class="t" style="top:610px;left:9.0px;width:174px;text-align:center;font-size:12px;"><span style="display:inline-block;transform:scaleX(0.91);transform-origin:50% 0">Play part</span></div>
<div class="t" style="top:639px;left:7.0px;width:174px;text-align:center;font-size:12px;"><span style="display:inline-block;transform:scaleX(0.91);transform-origin:50% 0">Play short vowel</span></div>
<div class="t" style="top:668px;left:9.0px;width:174px;text-align:center;font-size:12px;"><span style="display:inline-block;transform:scaleX(0.91);transform-origin:50% 0">Record</span></div>
<div class="t" style="top:719px;left:9.0px;width:174px;text-align:center;font-size:12px;"><span style="display:inline-block;transform:scaleX(0.91);transform-origin:50% 0">Clear all tracks</span></div>
<div class="t" style="top:83px;left:1174px;font-size:12px;"><span style="display:inline-block;transform:scaleX(0.91);transform-origin:0 0">Signal</span></div>
<div class="t" style="top:100px;left:1187px;font-size:12px;"><span style="display:inline-block;transform:scaleX(0.91);transform-origin:0 0">Pressure</span></div>
<div class="t" style="top:120px;left:1187px;font-size:12px;"><span style="display:inline-block;transform:scaleX(0.91);transform-origin:0 0">Volume velocity</span></div>
<div class="t" style="top:161px;left:1183px;font-size:12px;"><span style="display:inline-block;transform:scaleX(0.91);transform-origin:0 0">Main path</span></div>
<div class="t" style="top:184px;left:1183px;font-size:12px;"><span style="display:inline-block;transform:scaleX(0.91);transform-origin:0 0">Side paths</span></div>
<div class="t" style="top:207px;left:1183px;font-size:12px;"><span style="display:inline-block;transform:scaleX(0.91);transform-origin:0 0">Wall vibration</span></div>
<div class="t" style="top:230px;left:1183px;font-size:12px;"><span style="display:inline-block;transform:scaleX(0.91);transform-origin:0 0">Bernoulli effect</span></div>
<div class="t" style="top:253px;left:1183px;font-size:12px;"><span style="display:inline-block;transform:scaleX(0.91);transform-origin:0 0">Noise sources</span></div>
<div class="t" style="top:399px;left:209.0px;width:25px;text-align:center;font-weight:bold;">+</div>
<div class="t" style="top:430px;left:209.0px;width:25px;text-align:center;font-size:12px;"><span style="display:inline-block;transform:scaleX(0.91);transform-origin:50% 0">-</span></div>
<div class="t" style="top:655px;left:209.0px;width:25px;text-align:center;font-weight:bold;">+</div>
<div class="t" style="top:686px;left:209.0px;width:25px;text-align:center;font-size:12px;"><span style="display:inline-block;transform:scaleX(0.91);transform-origin:50% 0">-</span></div>
<div class="t" style="top:715px;left:209.0px;width:25px;text-align:center;font-weight:bold;">+</div>
<div class="t" style="top:746px;left:209.0px;width:25px;text-align:center;font-size:12px;"><span style="display:inline-block;transform:scaleX(0.91);transform-origin:50% 0">-</span></div>
<div class="t" style="top:971px;left:209.0px;width:25px;text-align:center;font-weight:bold;">+</div>
<div class="t" style="top:1002px;left:209.0px;width:25px;text-align:center;font-size:12px;"><span style="display:inline-block;transform:scaleX(0.91);transform-origin:50% 0">-</span></div>
<div class="t" style="top:101px;left:239px;width:40px;text-align:right;font-size:12px;"><span style="display:inline-block;transform:scaleX(0.91);transform-origin:100% 0">400</span></div>
<div class="t" style="top:130px;left:239px;width:40px;text-align:right;font-size:12px;"><span style="display:inline-block;transform:scaleX(0.91);transform-origin:100% 0">300</span></div>
<div class="t" style="top:158px;left:239px;width:40px;text-align:right;font-size:12px;"><span style="display:inline-block;transform:scaleX(0.91);transform-origin:100% 0">200</span></div>
<div class="t" style="top:187px;left:239px;width:40px;text-align:right;font-size:12px;"><span style="display:inline-block;transform:scaleX(0.91);transform-origin:100% 0">100</span></div>
<div class="t" style="top:244px;left:239px;width:40px;text-align:right;font-size:12px;"><span style="display:inline-block;transform:scaleX(0.91);transform-origin:100% 0">-100</span></div>
<div class="t" style="top:272px;left:239px;width:40px;text-align:right;font-size:12px;"><span style="display:inline-block;transform:scaleX(0.91);transform-origin:100% 0">-200</span></div>
<div class="t" style="top:300px;left:239px;width:40px;text-align:right;font-size:12px;"><span style="display:inline-block;transform:scaleX(0.91);transform-origin:100% 0">-300</span></div>
<div class="t" style="top:329px;left:239px;width:40px;text-align:right;font-size:12px;"><span style="display:inline-block;transform:scaleX(0.91);transform-origin:100% 0">-400</span></div>
<div class="t" style="top:350px;left:239px;width:40px;text-align:right;font-size:12px;"><span style="display:inline-block;transform:scaleX(0.91);transform-origin:100% 0">-500</span></div>
<div class="t" style="top:79px;left:221px;width:60px;text-align:right;font-size:12px;"><span style="display:inline-block;transform:scaleX(0.91);transform-origin:100% 0">cm^3/s</span></div>
<div class="t" style="top:372px;left:291px;font-size:12px;"><span style="display:inline-block;transform:scaleX(0.91);transform-origin:0 0">-.05</span></div>
<div class="t" style="top:372px;left:421px;width:40px;text-align:right;font-size:12px;"><span style="display:inline-block;transform:scaleX(0.91);transform-origin:100% 0">-.04</span></div>
<div class="t" style="top:372px;left:594px;width:40px;text-align:right;font-size:12px;"><span style="display:inline-block;transform:scaleX(0.91);transform-origin:100% 0">-.03</span></div>
<div class="t" style="top:372px;left:767px;width:40px;text-align:right;font-size:12px;"><span style="display:inline-block;transform:scaleX(0.91);transform-origin:100% 0">-.02</span></div>
<div class="t" style="top:372px;left:940px;width:40px;text-align:right;font-size:12px;"><span style="display:inline-block;transform:scaleX(0.91);transform-origin:100% 0">-.01</span></div>
<div class="t" style="top:370px;left:1133px;width:20px;text-align:right;font-size:12px;"><span style="display:inline-block;transform:scaleX(0.91);transform-origin:100% 0">s</span></div>
<div class="t" style="top:688px;left:295.9px;font-size:12px;"><span style="display:inline-block;transform:scaleX(0.91);transform-origin:0 0">-15</span></div>
<div class="t" style="top:688px;left:324.9px;font-size:12px;"><span style="display:inline-block;transform:scaleX(0.91);transform-origin:0 0">-14</span></div>
<div class="t" style="top:688px;left:352.9px;font-size:12px;"><span style="display:inline-block;transform:scaleX(0.91);transform-origin:0 0">-13</span></div>
<div class="t" style="top:688px;left:380.9px;font-size:12px;"><span style="display:inline-block;transform:scaleX(0.91);transform-origin:0 0">-12</span></div>
<div class="t" style="top:688px;left:409.9px;font-size:12px;"><span style="display:inline-block;transform:scaleX(0.91);transform-origin:0 0">-11</span></div>
<div class="t" style="top:688px;left:437.9px;font-size:12px;"><span style="display:inline-block;transform:scaleX(0.91);transform-origin:0 0">-10</span></div>
<div class="t" style="top:688px;left:471.4px;font-size:12px;"><span style="display:inline-block;transform:scaleX(0.91);transform-origin:0 0">-9</span></div>
<div class="t" style="top:688px;left:500.4px;font-size:12px;"><span style="display:inline-block;transform:scaleX(0.91);transform-origin:0 0">-8</span></div>
<div class="t" style="top:688px;left:528.4px;font-size:12px;"><span style="display:inline-block;transform:scaleX(0.91);transform-origin:0 0">-7</span></div>
<div class="t" style="top:688px;left:556.4px;font-size:12px;"><span style="display:inline-block;transform:scaleX(0.91);transform-origin:0 0">-6</span></div>
<div class="t" style="top:688px;left:584.4px;font-size:12px;"><span style="display:inline-block;transform:scaleX(0.91);transform-origin:0 0">-5</span></div>
<div class="t" style="top:688px;left:613.4px;font-size:12px;"><span style="display:inline-block;transform:scaleX(0.91);transform-origin:0 0">-4</span></div>
<div class="t" style="top:688px;left:641.4px;font-size:12px;"><span style="display:inline-block;transform:scaleX(0.91);transform-origin:0 0">-3</span></div>
<div class="t" style="top:688px;left:669.4px;font-size:12px;"><span style="display:inline-block;transform:scaleX(0.91);transform-origin:0 0">-2</span></div>
<div class="t" style="top:688px;left:698.4px;font-size:12px;"><span style="display:inline-block;transform:scaleX(0.91);transform-origin:0 0">-1</span></div>
<div class="t" style="top:688px;left:759.9px;font-size:12px;"><span style="display:inline-block;transform:scaleX(0.91);transform-origin:0 0">1</span></div>
<div class="t" style="top:688px;left:788.9px;font-size:12px;"><span style="display:inline-block;transform:scaleX(0.91);transform-origin:0 0">2</span></div>
<div class="t" style="top:688px;left:816.9px;font-size:12px;"><span style="display:inline-block;transform:scaleX(0.91);transform-origin:0 0">3</span></div>
<div class="t" style="top:688px;left:844.9px;font-size:12px;"><span style="display:inline-block;transform:scaleX(0.91);transform-origin:0 0">4</span></div>
<div class="t" style="top:688px;left:873.9px;font-size:12px;"><span style="display:inline-block;transform:scaleX(0.91);transform-origin:0 0">5</span></div>
<div class="t" style="top:688px;left:901.9px;font-size:12px;"><span style="display:inline-block;transform:scaleX(0.91);transform-origin:0 0">6</span></div>
<div class="t" style="top:688px;left:929.9px;font-size:12px;"><span style="display:inline-block;transform:scaleX(0.91);transform-origin:0 0">7</span></div>
<div class="t" style="top:688px;left:957.9px;font-size:12px;"><span style="display:inline-block;transform:scaleX(0.91);transform-origin:0 0">8</span></div>
<div class="t" style="top:688px;left:986.9px;font-size:12px;"><span style="display:inline-block;transform:scaleX(0.91);transform-origin:0 0">9</span></div>
<div class="t" style="top:688px;left:1009.4px;font-size:12px;"><span style="display:inline-block;transform:scaleX(0.91);transform-origin:0 0">10</span></div>
<div class="t" style="top:688px;left:1037.4px;font-size:12px;"><span style="display:inline-block;transform:scaleX(0.91);transform-origin:0 0">11</span></div>
<div class="t" style="top:688px;left:1066.4px;font-size:12px;"><span style="display:inline-block;transform:scaleX(0.91);transform-origin:0 0">12</span></div>
<div class="t" style="top:688px;left:1094.4px;font-size:12px;"><span style="display:inline-block;transform:scaleX(0.91);transform-origin:0 0">13</span></div>
<div class="t" style="top:688px;left:1122.4px;font-size:12px;"><span style="display:inline-block;transform:scaleX(0.91);transform-origin:0 0">14</span></div>
<div class="t" style="top:688px;left:1151.4px;font-size:12px;"><span style="display:inline-block;transform:scaleX(0.91);transform-origin:0 0">15</span></div>
<div class="t" style="top:688px;left:1179.4px;font-size:12px;"><span style="display:inline-block;transform:scaleX(0.91);transform-origin:0 0">16</span></div>
<div class="t" style="top:688px;left:1207.4px;font-size:12px;"><span style="display:inline-block;transform:scaleX(0.91);transform-origin:0 0">17</span></div>
<div class="t" style="top:688px;left:1235.4px;font-size:12px;"><span style="display:inline-block;transform:scaleX(0.91);transform-origin:0 0">18</span></div>
<div class="t" style="top:686px;left:1243px;width:30px;text-align:right;font-size:12px;"><span style="display:inline-block;transform:scaleX(0.91);transform-origin:100% 0">cm</span></div>
<div class="t" style="top:394px;left:225px;width:60px;text-align:right;font-size:12px;"><span style="display:inline-block;transform:scaleX(0.91);transform-origin:100% 0">cm^3/s</span></div>
<div class="t" style="top:416px;left:244px;width:40px;text-align:right;font-size:12px;"><span style="display:inline-block;transform:scaleX(0.91);transform-origin:100% 0">400</span></div>
<div class="t" style="top:445px;left:244px;width:40px;text-align:right;font-size:12px;"><span style="display:inline-block;transform:scaleX(0.91);transform-origin:100% 0">300</span></div>
<div class="t" style="top:473px;left:244px;width:40px;text-align:right;font-size:12px;"><span style="display:inline-block;transform:scaleX(0.91);transform-origin:100% 0">200</span></div>
<div class="t" style="top:502px;left:244px;width:40px;text-align:right;font-size:12px;"><span style="display:inline-block;transform:scaleX(0.91);transform-origin:100% 0">100</span></div>
<div class="t" style="top:559px;left:244px;width:40px;text-align:right;font-size:12px;"><span style="display:inline-block;transform:scaleX(0.91);transform-origin:100% 0">-100</span></div>
<div class="t" style="top:588px;left:244px;width:40px;text-align:right;font-size:12px;"><span style="display:inline-block;transform:scaleX(0.91);transform-origin:100% 0">-200</span></div>
<div class="t" style="top:616px;left:244px;width:40px;text-align:right;font-size:12px;"><span style="display:inline-block;transform:scaleX(0.91);transform-origin:100% 0">-300</span></div>
<div class="t" style="top:645px;left:244px;width:40px;text-align:right;font-size:12px;"><span style="display:inline-block;transform:scaleX(0.91);transform-origin:100% 0">-400</span></div>
<div class="t" style="top:666px;left:244px;width:40px;text-align:right;font-size:12px;"><span style="display:inline-block;transform:scaleX(0.91);transform-origin:100% 0">-500</span></div>
<div class="t" style="top:1004px;left:295.9px;font-size:12px;"><span style="display:inline-block;transform:scaleX(0.91);transform-origin:0 0">-15</span></div>
<div class="t" style="top:1004px;left:324.9px;font-size:12px;"><span style="display:inline-block;transform:scaleX(0.91);transform-origin:0 0">-14</span></div>
<div class="t" style="top:1004px;left:352.9px;font-size:12px;"><span style="display:inline-block;transform:scaleX(0.91);transform-origin:0 0">-13</span></div>
<div class="t" style="top:1004px;left:380.9px;font-size:12px;"><span style="display:inline-block;transform:scaleX(0.91);transform-origin:0 0">-12</span></div>
<div class="t" style="top:1004px;left:409.9px;font-size:12px;"><span style="display:inline-block;transform:scaleX(0.91);transform-origin:0 0">-11</span></div>
<div class="t" style="top:1004px;left:437.9px;font-size:12px;"><span style="display:inline-block;transform:scaleX(0.91);transform-origin:0 0">-10</span></div>
<div class="t" style="top:1004px;left:471.4px;font-size:12px;"><span style="display:inline-block;transform:scaleX(0.91);transform-origin:0 0">-9</span></div>
<div class="t" style="top:1004px;left:500.4px;font-size:12px;"><span style="display:inline-block;transform:scaleX(0.91);transform-origin:0 0">-8</span></div>
<div class="t" style="top:1004px;left:528.4px;font-size:12px;"><span style="display:inline-block;transform:scaleX(0.91);transform-origin:0 0">-7</span></div>
<div class="t" style="top:1004px;left:556.4px;font-size:12px;"><span style="display:inline-block;transform:scaleX(0.91);transform-origin:0 0">-6</span></div>
<div class="t" style="top:1004px;left:584.4px;font-size:12px;"><span style="display:inline-block;transform:scaleX(0.91);transform-origin:0 0">-5</span></div>
<div class="t" style="top:1004px;left:613.4px;font-size:12px;"><span style="display:inline-block;transform:scaleX(0.91);transform-origin:0 0">-4</span></div>
<div class="t" style="top:1004px;left:641.4px;font-size:12px;"><span style="display:inline-block;transform:scaleX(0.91);transform-origin:0 0">-3</span></div>
<div class="t" style="top:1004px;left:669.4px;font-size:12px;"><span style="display:inline-block;transform:scaleX(0.91);transform-origin:0 0">-2</span></div>
<div class="t" style="top:1004px;left:698.4px;font-size:12px;"><span style="display:inline-block;transform:scaleX(0.91);transform-origin:0 0">-1</span></div>
<div class="t" style="top:1004px;left:759.9px;font-size:12px;"><span style="display:inline-block;transform:scaleX(0.91);transform-origin:0 0">1</span></div>
<div class="t" style="top:1004px;left:788.9px;font-size:12px;"><span style="display:inline-block;transform:scaleX(0.91);transform-origin:0 0">2</span></div>
<div class="t" style="top:1004px;left:816.9px;font-size:12px;"><span style="display:inline-block;transform:scaleX(0.91);transform-origin:0 0">3</span></div>
<div class="t" style="top:1004px;left:844.9px;font-size:12px;"><span style="display:inline-block;transform:scaleX(0.91);transform-origin:0 0">4</span></div>
<div class="t" style="top:1004px;left:873.9px;font-size:12px;"><span style="display:inline-block;transform:scaleX(0.91);transform-origin:0 0">5</span></div>
<div class="t" style="top:1004px;left:901.9px;font-size:12px;"><span style="display:inline-block;transform:scaleX(0.91);transform-origin:0 0">6</span></div>
<div class="t" style="top:1004px;left:929.9px;font-size:12px;"><span style="display:inline-block;transform:scaleX(0.91);transform-origin:0 0">7</span></div>
<div class="t" style="top:1004px;left:957.9px;font-size:12px;"><span style="display:inline-block;transform:scaleX(0.91);transform-origin:0 0">8</span></div>
<div class="t" style="top:1004px;left:986.9px;font-size:12px;"><span style="display:inline-block;transform:scaleX(0.91);transform-origin:0 0">9</span></div>
<div class="t" style="top:1004px;left:1009.4px;font-size:12px;"><span style="display:inline-block;transform:scaleX(0.91);transform-origin:0 0">10</span></div>
<div class="t" style="top:1004px;left:1037.4px;font-size:12px;"><span style="display:inline-block;transform:scaleX(0.91);transform-origin:0 0">11</span></div>
<div class="t" style="top:1004px;left:1066.4px;font-size:12px;"><span style="display:inline-block;transform:scaleX(0.91);transform-origin:0 0">12</span></div>
<div class="t" style="top:1004px;left:1094.4px;font-size:12px;"><span style="display:inline-block;transform:scaleX(0.91);transform-origin:0 0">13</span></div>
<div class="t" style="top:1004px;left:1122.4px;font-size:12px;"><span style="display:inline-block;transform:scaleX(0.91);transform-origin:0 0">14</span></div>
<div class="t" style="top:1004px;left:1151.4px;font-size:12px;"><span style="display:inline-block;transform:scaleX(0.91);transform-origin:0 0">15</span></div>
<div class="t" style="top:1004px;left:1179.4px;font-size:12px;"><span style="display:inline-block;transform:scaleX(0.91);transform-origin:0 0">16</span></div>
<div class="t" style="top:1004px;left:1207.4px;font-size:12px;"><span style="display:inline-block;transform:scaleX(0.91);transform-origin:0 0">17</span></div>
<div class="t" style="top:1004px;left:1235.4px;font-size:12px;"><span style="display:inline-block;transform:scaleX(0.91);transform-origin:0 0">18</span></div>
<div class="t" style="top:1002px;left:1243px;width:30px;text-align:right;font-size:12px;"><span style="display:inline-block;transform:scaleX(0.91);transform-origin:100% 0">cm</span></div>
<div class="t" style="top:710px;left:224px;width:60px;text-align:right;font-size:12px;"><span style="display:inline-block;transform:scaleX(0.91);transform-origin:100% 0">cm^2</span></div>
<div class="t" style="top:746px;left:244px;width:40px;text-align:right;font-size:12px;"><span style="display:inline-block;transform:scaleX(0.91);transform-origin:100% 0">8</span></div>
<div class="t" style="top:783px;left:244px;width:40px;text-align:right;font-size:12px;"><span style="display:inline-block;transform:scaleX(0.91);transform-origin:100% 0">6</span></div>
<div class="t" style="top:819px;left:244px;width:40px;text-align:right;font-size:12px;"><span style="display:inline-block;transform:scaleX(0.91);transform-origin:100% 0">4</span></div>
<div class="t" style="top:856px;left:244px;width:40px;text-align:right;font-size:12px;"><span style="display:inline-block;transform:scaleX(0.91);transform-origin:100% 0">2</span></div>
<div class="t" style="top:929px;left:244px;width:40px;text-align:right;font-size:12px;"><span style="display:inline-block;transform:scaleX(0.91);transform-origin:100% 0">-2</span></div>
<div class="t" style="top:966px;left:244px;width:40px;text-align:right;font-size:12px;"><span style="display:inline-block;transform:scaleX(0.91);transform-origin:100% 0">-4</span></div>
<div class="t" style="top:710px;left:301px;font-size:12px;"><span style="display:inline-block;transform:scaleX(0.91);transform-origin:0 0">Selected section: 3</span></div></div>
</body></html>
